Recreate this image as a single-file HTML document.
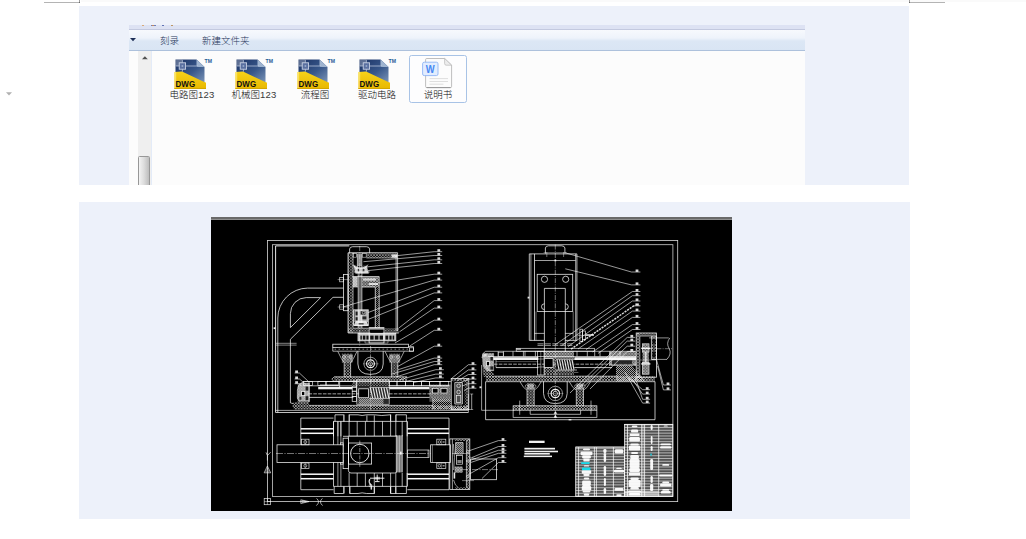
<!DOCTYPE html>
<html lang="zh-CN"><head><meta charset="utf-8"><title>CAD图纸预览</title>
<style>
html,body{margin:0;padding:0;background:#fff;}
body{width:1026px;height:539px;position:relative;overflow:hidden;font-family:"Liberation Sans","Noto Sans CJK SC",sans-serif;}
.abs{position:absolute;}
.panel{position:absolute;background:#edf1fa;}
#p1{left:79px;top:6px;width:830px;height:179px;}
#p2{left:79px;top:202px;width:831px;height:317px;}
#exp{position:absolute;left:129px;top:25px;width:675.5px;height:160px;background:#fcfcfc;overflow:hidden;}
#exp .top{position:absolute;left:0;top:0;width:100%;height:5px;background:#dde2f3;border-bottom:1px solid #c3c9df;box-sizing:border-box;}
#exp .bar{position:absolute;left:0;top:5px;width:100%;height:21px;background:linear-gradient(#f7f9fd 0%,#eef3fb 40%,#dce7f5 55%,#d9e5f4 100%);border-bottom:1px solid #adc1dc;box-sizing:border-box;}
#exp .track{position:absolute;left:9px;top:26px;width:13px;height:134px;background:#efefef;}
#exp .tline{position:absolute;left:22px;top:26px;width:1px;height:134px;background:#e3ebf8;}
#exp .thumb{position:absolute;left:9.1px;top:131px;width:11.9px;height:40px;border:1px solid #979797;border-radius:1.5px;box-sizing:border-box;background:linear-gradient(90deg,#f3f3f3 0%,#dcdcdc 50%,#bdbdbd 100%);}
.t{position:absolute;white-space:nowrap;color:#1a1a1a;font-size:12px;line-height:15px;font-weight:300;transform:scale(.792);transform-origin:0 0;}
.lab{position:absolute;white-space:nowrap;color:#0a0a0a;font-size:12px;line-height:15px;text-align:center;transform:translateX(-50%) scale(.792);transform-origin:50% 0;font-weight:300;}
.dg{color:#3a3a3a;letter-spacing:.2px;}
.sel{position:absolute;left:280px;top:30px;width:58px;height:48px;border:1px solid #a8c3e6;border-radius:2.5px;box-sizing:border-box;background:#fdfdfe;}
.tm{position:absolute;font-size:4.2px;line-height:5px;font-weight:bold;color:#2a5a8a;letter-spacing:0;}
.deco{position:absolute;background:#8c8c8c;}
svg{position:absolute;left:0;top:0;overflow:visible;}
</style></head>
<body>
<div class="deco" style="left:81px;top:0;width:828px;height:2px;background:#fafafa"></div>
<div class="deco" style="left:910px;top:0;width:116px;height:2px;background:#fafafa"></div>
<div class="deco" style="left:44px;top:2px;width:36px;height:1px;background:#b4b4b4"></div>
<div class="deco" style="left:79px;top:0;width:1px;height:3px;background:#a0a0a0"></div>
<div class="deco" style="left:79px;top:2px;width:1px;height:1px;background:#6a6a6a"></div>
<div class="deco" style="left:909px;top:2px;width:36px;height:1px;background:#b4b4b4"></div>
<div class="deco" style="left:909px;top:0;width:1px;height:3px;background:#a0a0a0"></div>
<div class="deco" style="left:909px;top:2px;width:1px;height:1px;background:#6a6a6a"></div>
<svg class="abs" style="left:5.5px;top:92px" width="7" height="4" viewBox="0 0 7 4"><path d="M0 0.3 H6 L3 3.4 Z" fill="#b0b0b0"/></svg>
<div class="panel" id="p1"></div>
<div class="panel" id="p2"></div>
<div id="exp">
<div class="top"></div><div class="bar"></div>
<div class="abs" style="left:12.8px;top:0;width:1.8px;height:1.2px;background:#d9a060;opacity:.85"></div>
<div class="abs" style="left:21.6px;top:0;width:5.2px;height:1.2px;background:#5a6fb0;opacity:.85"></div>
<div class="abs" style="left:23.4px;top:0;width:1.6px;height:1.2px;background:#d08a50;opacity:.85"></div>
<div class="abs" style="left:33.2px;top:0;width:1.8px;height:1.2px;background:#4a5fa8;opacity:.85"></div>
<div class="abs" style="left:42.2px;top:0;width:2px;height:1.2px;background:#b88a4a;opacity:.85"></div>
<svg class="abs" style="left:0.8px;top:13px" width="7" height="4" viewBox="0 0 7 4"><path d="M0 0 H6 L3 3.2 Z" fill="#1e2f57"/></svg>
<div class="t" style="left:31.2px;top:9.6px;color:#28365a">刻录</div>
<div class="t" style="left:73.2px;top:9.6px;color:#28365a">新建文件夹</div>
<div class="track"></div><div class="tline"></div><div class="thumb"></div>
<svg class="abs" style="left:12.8px;top:31px" width="7" height="4" viewBox="0 0 7 4"><path d="M0 3.2 L2.9 0.2 L5.8 3.2 Z" fill="#505050"/></svg>
<div class="sel"></div>
<svg class="abs" style="left:45px;top:33.6px" width="40" height="32" viewBox="0 0 40 32">
<defs><linearGradient id="gb45" x1="0" y1="0" x2="1" y2="1"><stop offset="0" stop-color="#1b3264"/><stop offset="0.55" stop-color="#38578a"/><stop offset="1" stop-color="#7d96b8"/></linearGradient>
<linearGradient id="gy45" x1="0" y1="0" x2="0" y2="1"><stop offset="0" stop-color="#f6d21a"/><stop offset="1" stop-color="#e8b800"/></linearGradient></defs>
<path d="M1.5 0.5 H22.5 L30.5 8 V24 H1.5 Z" fill="url(#gb45)"/>
<path d="M22.5 0.5 L30.5 8 H24.5 Q22.5 8 22.5 6 Z" fill="#9fb4d0"/>
<path d="M0.3 13 L8 12.6 L31.3 23.6 H32 V30 H0.3 Z" fill="url(#gy45)"/>
<path d="M0.3 30 H32 V29 H0.3 Z" fill="#c79a00" opacity="0.6"/>
<path d="M0.3 13 L2.2 12.9 V29 H0.3 Z" fill="#fff3a0" opacity="0.55"/>
<path d="M1.5 0.5 H8 V7 H1.5 Z" fill="#fff" opacity="0.28"/>
<rect x="5.2" y="3.8" width="6.4" height="6.4" fill="#5a70a0" stroke="#d5ddec" stroke-width="0.8"/>
<rect x="7.6" y="6.2" width="1.6" height="1.6" fill="#9fb0d0"/>
<path d="M8.4 0.8 V3.8 M8.4 10.2 V12.6 M1.8 7 H5.2 M11.6 7 H24" stroke="#c9d3e6" stroke-width="0.7" fill="none"/>
<g transform="translate(1.6 28.2) scale(0.5)"><text x="0" y="0" font-family="Liberation Sans, sans-serif" font-weight="bold" font-size="17.2" fill="#111" textLength="39" lengthAdjust="spacingAndGlyphs">DWG</text></g>
<g transform="translate(30.6 4.4) scale(0.25)"><text x="0" y="0" font-family="Liberation Sans, sans-serif" font-weight="bold" font-size="20" fill="#1f5a94" textLength="29.6" lengthAdjust="spacingAndGlyphs">TM</text></g>
</svg>
<div class="lab" style="left:63.4px;top:63.8px">电路图<span class="dg">123</span></div>
<svg class="abs" style="left:106.4px;top:33.6px" width="40" height="32" viewBox="0 0 40 32">
<defs><linearGradient id="gb106" x1="0" y1="0" x2="1" y2="1"><stop offset="0" stop-color="#1b3264"/><stop offset="0.55" stop-color="#38578a"/><stop offset="1" stop-color="#7d96b8"/></linearGradient>
<linearGradient id="gy106" x1="0" y1="0" x2="0" y2="1"><stop offset="0" stop-color="#f6d21a"/><stop offset="1" stop-color="#e8b800"/></linearGradient></defs>
<path d="M1.5 0.5 H22.5 L30.5 8 V24 H1.5 Z" fill="url(#gb106)"/>
<path d="M22.5 0.5 L30.5 8 H24.5 Q22.5 8 22.5 6 Z" fill="#9fb4d0"/>
<path d="M0.3 13 L8 12.6 L31.3 23.6 H32 V30 H0.3 Z" fill="url(#gy106)"/>
<path d="M0.3 30 H32 V29 H0.3 Z" fill="#c79a00" opacity="0.6"/>
<path d="M0.3 13 L2.2 12.9 V29 H0.3 Z" fill="#fff3a0" opacity="0.55"/>
<path d="M1.5 0.5 H8 V7 H1.5 Z" fill="#fff" opacity="0.28"/>
<rect x="5.2" y="3.8" width="6.4" height="6.4" fill="#5a70a0" stroke="#d5ddec" stroke-width="0.8"/>
<rect x="7.6" y="6.2" width="1.6" height="1.6" fill="#9fb0d0"/>
<path d="M8.4 0.8 V3.8 M8.4 10.2 V12.6 M1.8 7 H5.2 M11.6 7 H24" stroke="#c9d3e6" stroke-width="0.7" fill="none"/>
<g transform="translate(1.6 28.2) scale(0.5)"><text x="0" y="0" font-family="Liberation Sans, sans-serif" font-weight="bold" font-size="17.2" fill="#111" textLength="39" lengthAdjust="spacingAndGlyphs">DWG</text></g>
<g transform="translate(30.6 4.4) scale(0.25)"><text x="0" y="0" font-family="Liberation Sans, sans-serif" font-weight="bold" font-size="20" fill="#1f5a94" textLength="29.6" lengthAdjust="spacingAndGlyphs">TM</text></g>
</svg>
<div class="lab" style="left:124.80000000000001px;top:63.8px">机械图<span class="dg">123</span></div>
<svg class="abs" style="left:167.8px;top:33.6px" width="40" height="32" viewBox="0 0 40 32">
<defs><linearGradient id="gb167" x1="0" y1="0" x2="1" y2="1"><stop offset="0" stop-color="#1b3264"/><stop offset="0.55" stop-color="#38578a"/><stop offset="1" stop-color="#7d96b8"/></linearGradient>
<linearGradient id="gy167" x1="0" y1="0" x2="0" y2="1"><stop offset="0" stop-color="#f6d21a"/><stop offset="1" stop-color="#e8b800"/></linearGradient></defs>
<path d="M1.5 0.5 H22.5 L30.5 8 V24 H1.5 Z" fill="url(#gb167)"/>
<path d="M22.5 0.5 L30.5 8 H24.5 Q22.5 8 22.5 6 Z" fill="#9fb4d0"/>
<path d="M0.3 13 L8 12.6 L31.3 23.6 H32 V30 H0.3 Z" fill="url(#gy167)"/>
<path d="M0.3 30 H32 V29 H0.3 Z" fill="#c79a00" opacity="0.6"/>
<path d="M0.3 13 L2.2 12.9 V29 H0.3 Z" fill="#fff3a0" opacity="0.55"/>
<path d="M1.5 0.5 H8 V7 H1.5 Z" fill="#fff" opacity="0.28"/>
<rect x="5.2" y="3.8" width="6.4" height="6.4" fill="#5a70a0" stroke="#d5ddec" stroke-width="0.8"/>
<rect x="7.6" y="6.2" width="1.6" height="1.6" fill="#9fb0d0"/>
<path d="M8.4 0.8 V3.8 M8.4 10.2 V12.6 M1.8 7 H5.2 M11.6 7 H24" stroke="#c9d3e6" stroke-width="0.7" fill="none"/>
<g transform="translate(1.6 28.2) scale(0.5)"><text x="0" y="0" font-family="Liberation Sans, sans-serif" font-weight="bold" font-size="17.2" fill="#111" textLength="39" lengthAdjust="spacingAndGlyphs">DWG</text></g>
<g transform="translate(30.6 4.4) scale(0.25)"><text x="0" y="0" font-family="Liberation Sans, sans-serif" font-weight="bold" font-size="20" fill="#1f5a94" textLength="29.6" lengthAdjust="spacingAndGlyphs">TM</text></g>
</svg>
<div class="lab" style="left:186.20000000000002px;top:63.8px">流程图</div>
<svg class="abs" style="left:229.2px;top:33.6px" width="40" height="32" viewBox="0 0 40 32">
<defs><linearGradient id="gb229" x1="0" y1="0" x2="1" y2="1"><stop offset="0" stop-color="#1b3264"/><stop offset="0.55" stop-color="#38578a"/><stop offset="1" stop-color="#7d96b8"/></linearGradient>
<linearGradient id="gy229" x1="0" y1="0" x2="0" y2="1"><stop offset="0" stop-color="#f6d21a"/><stop offset="1" stop-color="#e8b800"/></linearGradient></defs>
<path d="M1.5 0.5 H22.5 L30.5 8 V24 H1.5 Z" fill="url(#gb229)"/>
<path d="M22.5 0.5 L30.5 8 H24.5 Q22.5 8 22.5 6 Z" fill="#9fb4d0"/>
<path d="M0.3 13 L8 12.6 L31.3 23.6 H32 V30 H0.3 Z" fill="url(#gy229)"/>
<path d="M0.3 30 H32 V29 H0.3 Z" fill="#c79a00" opacity="0.6"/>
<path d="M0.3 13 L2.2 12.9 V29 H0.3 Z" fill="#fff3a0" opacity="0.55"/>
<path d="M1.5 0.5 H8 V7 H1.5 Z" fill="#fff" opacity="0.28"/>
<rect x="5.2" y="3.8" width="6.4" height="6.4" fill="#5a70a0" stroke="#d5ddec" stroke-width="0.8"/>
<rect x="7.6" y="6.2" width="1.6" height="1.6" fill="#9fb0d0"/>
<path d="M8.4 0.8 V3.8 M8.4 10.2 V12.6 M1.8 7 H5.2 M11.6 7 H24" stroke="#c9d3e6" stroke-width="0.7" fill="none"/>
<g transform="translate(1.6 28.2) scale(0.5)"><text x="0" y="0" font-family="Liberation Sans, sans-serif" font-weight="bold" font-size="17.2" fill="#111" textLength="39" lengthAdjust="spacingAndGlyphs">DWG</text></g>
<g transform="translate(30.6 4.4) scale(0.25)"><text x="0" y="0" font-family="Liberation Sans, sans-serif" font-weight="bold" font-size="20" fill="#1f5a94" textLength="29.6" lengthAdjust="spacingAndGlyphs">TM</text></g>
</svg>
<div class="lab" style="left:247.6px;top:63.8px">驱动电路</div>
<svg class="abs" style="left:292.6px;top:32.8px" width="32" height="32" viewBox="0 0 32 32">
<path d="M3.6 1.6 Q3.6 0.5 4.8 0.5 H22.6 L29.6 7.2 V28.4 Q29.6 29.6 28.4 29.6 H4.8 Q3.6 29.6 3.6 28.4 Z" fill="#fcfcfc" stroke="#adadad" stroke-width="0.8"/>
<path d="M4.6 29.6 H28.6" stroke="#8a8a8a" stroke-width="0.8"/>
<path d="M22.6 0.4 V5.6 Q22.6 7.2 24.2 7.2 H29.6 Z" fill="#ececec" stroke="#b9b9b9" stroke-width="0.7"/>
<path d="M7.5 20.6 H26 M7.5 23.5 H26 M7.5 26.2 H21.4" stroke="#d6d6d6" stroke-width="0.8"/>
<rect x="0.6" y="4.2" width="15.4" height="13.4" rx="1.6" fill="#e2edff" stroke="#8fb4f5" stroke-width="0.9"/>
<g transform="translate(8.3 14.9) scale(0.5)"><text x="0" y="0" text-anchor="middle" font-family="Liberation Sans, sans-serif" font-weight="bold" font-size="20.4" fill="#4688f2" textLength="17.8" lengthAdjust="spacingAndGlyphs">W</text></g>
</svg>
<div class="lab" style="left:309.2px;top:63.8px">说明书</div>
</div>
<div class="abs" style="left:211px;top:217px;width:521px;height:294px;background:#000;"></div>
<div class="abs" style="left:211px;top:217px;width:521px;height:2px;background:#6a6a6a;"></div>
<div class="abs" style="left:211px;top:219px;width:521px;height:1px;background:#8e8e8e;"></div>
<svg width="1026" height="539" viewBox="0 0 1026 539">
<defs>
<pattern id="hx" width="2.9" height="2.9" patternUnits="userSpaceOnUse"><path d="M-0.5 -0.5 L3.4 3.4 M-0.5 3.4 L3.4 -0.5" stroke="#fff" stroke-width="0.6"/></pattern>
<pattern id="hd" width="2" height="2" patternUnits="userSpaceOnUse"><path d="M-0.5 2.5 L2.5 -0.5" stroke="#fff" stroke-width="0.7"/></pattern>
<clipPath id="cadclip"><rect x="211" y="220" width="521" height="291"/></clipPath>
</defs>
<g clip-path="url(#cadclip)" stroke-linecap="butt">
<rect x="267.5" y="240.5" width="410.20000000000005" height="261.1" fill="none" stroke="#fff" stroke-width="0.8" stroke-opacity="0.85"/>
<rect x="272.5" y="244.7" width="400.4" height="251.7" fill="none" stroke="#fff" stroke-width="0.8" stroke-opacity="0.8"/>
<rect x="264.2" y="498.6" width="6.400000000000034" height="6.099999999999966" fill="none" stroke="#fff" stroke-width="0.7" stroke-opacity="0.9"/>
<line x1="267.4" y1="498.6" x2="267.4" y2="504.7" stroke="#fff" stroke-width="0.6" stroke-opacity="0.8"/>
<line x1="264.2" y1="501.6" x2="270.6" y2="501.6" stroke="#fff" stroke-width="0.6" stroke-opacity="0.8"/>
<polygon points="300.8,499.8 309,501.6 300.8,503.5" fill="none" stroke="#fff" stroke-width="0.7" stroke-opacity="0.9"/>
<polygon points="302,500.6 306.5,501.6 302,502.7" fill="none" stroke="#fff" stroke-width="0.6" stroke-opacity="0.8"/>
<path d="M316.6 498.4 Q320.6 501.8 316.4 505.6 M322.4 498.4 Q318.4 501.8 322.6 505.6" fill="none" stroke="#fff" stroke-width="0.7" stroke-opacity="0.9"/>
<polygon points="267.4,466 270.7,472.8 264.2,472.8" fill="none" stroke="#fff" stroke-width="0.7" stroke-opacity="0.9"/>
<polygon points="267.4,468.4 269.2,471.8 265.7,471.8" fill="none" stroke="#fff" stroke-width="0.5" stroke-opacity="0.7"/>
<path d="M266 452.4 L267.4 455.6 L270.6 452.2 M267.4 455.6 V460.5" fill="none" stroke="#fff" stroke-width="0.7" stroke-opacity="0.9"/>
<polyline points="275.6,412.5 275.6,245.9 349.3,245.9" fill="none" stroke="#fff" stroke-width="0.9" stroke-opacity="1"/>
<path d="M277.8 412.5 V318 A30 30 0 0 1 307.6 288.1 H343.4" fill="none" stroke="#fff" stroke-width="0.8" stroke-opacity="0.9"/>
<path d="M290.4 327.6 V313.6 A16 16 0 0 1 306.2 297.6 H320.6 Z" fill="none" stroke="#fff" stroke-width="0.8" stroke-opacity="0.9"/>
<polyline points="343.4,297.3 333,297.3 290.4,339.3 290.4,402.9" fill="none" stroke="#fff" stroke-width="0.8" stroke-opacity="0.9"/>
<line x1="276" y1="343.3" x2="296.6" y2="343.3" stroke="#fff" stroke-width="0.6" stroke-opacity="0.85"/>
<line x1="276" y1="345.1" x2="296.6" y2="345.1" stroke="#fff" stroke-width="0.6" stroke-opacity="0.85"/>
<rect x="273.6" y="327.3" width="1.7999999999999545" height="1.8000000000000114" fill="#fff" fill-opacity="0.9" stroke="none"/>
<line x1="275.6" y1="410.4" x2="468.4" y2="410.4" stroke="#fff" stroke-width="0.7" stroke-opacity="0.9"/>
<line x1="275.6" y1="412.5" x2="468.4" y2="412.5" stroke="#fff" stroke-width="0.8" stroke-opacity="0.95"/>
<line x1="468.4" y1="394" x2="468.4" y2="412.5" stroke="#fff" stroke-width="0.7" stroke-opacity="0.8"/>
<path d="M349.6 252.8 V249 Q349.8 246.9 352.6 246.7 H366.6 Q369.4 246.9 369.6 249 V252.8" fill="none" stroke="#fff" stroke-width="0.8" stroke-opacity="0.9"/>
<line x1="359.7" y1="246" x2="359.7" y2="346" stroke="#fff" stroke-width="0.6" stroke-opacity="0.7" stroke-dasharray="5 1.2 1 1.2"/>
<polyline points="348.1,333 348.1,252.8 397.6,252.8" fill="none" stroke="#fff" stroke-width="0.9" stroke-opacity="0.95"/>
<rect x="348.3" y="253" width="4.699999999999989" height="80" fill="url(#hx)" fill-opacity="0.62" stroke="none"/>
<line x1="353" y1="253" x2="353" y2="328" stroke="#fff" stroke-width="0.7" stroke-opacity="0.9"/>
<rect x="366.4" y="253.4" width="30.600000000000023" height="4.599999999999994" fill="url(#hx)" fill-opacity="0.8" stroke="none"/>
<line x1="366.4" y1="258" x2="396" y2="258" stroke="#fff" stroke-width="0.6" stroke-opacity="0.8"/>
<rect x="391.6" y="254.4" width="5.7999999999999545" height="3.200000000000017" fill="#fff" fill-opacity="0.8" stroke="none"/>
<line x1="396.1" y1="254.6" x2="396.1" y2="331" stroke="#fff" stroke-width="0.8" stroke-opacity="0.9"/>
<line x1="397.6" y1="252.8" x2="397.6" y2="331" stroke="#fff" stroke-width="0.8" stroke-opacity="0.9"/>
<rect x="348.3" y="328.2" width="20.30000000000001" height="4.800000000000011" fill="url(#hx)" fill-opacity="0.8" stroke="none"/>
<rect x="384.6" y="328.2" width="14.199999999999989" height="4.800000000000011" fill="url(#hx)" fill-opacity="0.8" stroke="none"/>
<line x1="348.1" y1="333" x2="398.8" y2="333" stroke="#fff" stroke-width="0.8" stroke-opacity="0.9"/>
<line x1="353" y1="328.2" x2="368.6" y2="328.2" stroke="#fff" stroke-width="0.7" stroke-opacity="0.8"/>
<rect x="353.2" y="253.4" width="3.400000000000034" height="3.799999999999983" fill="none" stroke="#fff" stroke-width="0.6" stroke-opacity="0.8"/>
<rect x="362.2" y="253.4" width="4.0" height="3.799999999999983" fill="none" stroke="#fff" stroke-width="0.6" stroke-opacity="0.8"/>
<rect x="357.6" y="253.6" width="4.0" height="12.400000000000006" fill="#fff" fill-opacity="0.55" stroke="none"/>
<line x1="357.4" y1="254" x2="357.4" y2="268" stroke="#fff" stroke-width="0.7" stroke-opacity="0.9"/>
<line x1="361.8" y1="254" x2="361.8" y2="268" stroke="#fff" stroke-width="0.7" stroke-opacity="0.9"/>
<path d="M353.6 265.2 L355.6 273.4 H368.6 L366.4 265.8 L362.4 267.4 L357.6 267.2 Z" fill="#fff" stroke="#fff" stroke-width="0.4" stroke-opacity="0.6" fill-opacity="0.78"/>
<rect x="357.8" y="268.4" width="1.3999999999999773" height="3.2000000000000455" fill="#000" fill-opacity="0.8" stroke="none"/>
<rect x="362.6" y="268.4" width="1.7999999999999545" height="3.2000000000000455" fill="#000" fill-opacity="0.8" stroke="none"/>
<rect x="353.4" y="264.8" width="14.600000000000023" height="7.199999999999989" fill="url(#hx)" fill-opacity="0.35" stroke="none"/>
<polyline points="353.2,264.6 356,268.4 365,268.4 368,264.6" fill="none" stroke="#fff" stroke-width="0.7" stroke-opacity="0.9"/>
<line x1="354" y1="272" x2="369.6" y2="272" stroke="#fff" stroke-width="0.8" stroke-opacity="0.9"/>
<rect x="358.3" y="275" width="3.5" height="53" fill="#6a6a6a" fill-opacity="0.9" stroke="none"/>
<line x1="358.2" y1="272" x2="358.2" y2="328" stroke="#fff" stroke-width="0.7" stroke-opacity="0.9"/>
<line x1="361.9" y1="272" x2="361.9" y2="328" stroke="#fff" stroke-width="0.7" stroke-opacity="0.9"/>
<rect x="353" y="276.8" width="4.600000000000023" height="10.0" fill="#c4c4c4" fill-opacity="0.9" stroke="none"/>
<rect x="352.6" y="276.6" width="5.199999999999989" height="10.399999999999977" fill="url(#hx)" fill-opacity="0.6" stroke="none"/>
<rect x="362.2" y="276.6" width="16.80000000000001" height="10.399999999999977" fill="url(#hx)" fill-opacity="0.85" stroke="none"/>
<rect x="362.4" y="276.8" width="16.600000000000023" height="10.199999999999989" fill="#fff" fill-opacity="0.22" stroke="none"/>
<rect x="363" y="278.4" width="13" height="2.2000000000000455" fill="#fff" fill-opacity="0.7" stroke="none"/>
<rect x="369" y="283.0" width="9" height="2.0" fill="#fff" fill-opacity="0.75" stroke="none"/>
<polyline points="352.4,276.6 379.2,276.6 379.2,328" fill="none" stroke="#fff" stroke-width="0.8" stroke-opacity="0.9"/>
<polyline points="362,287 375.3,287 375.3,328" fill="none" stroke="#fff" stroke-width="0.8" stroke-opacity="0.9"/>
<rect x="375.5" y="287" width="3.5" height="41" fill="url(#hd)" fill-opacity="0.55" stroke="none"/>
<line x1="352.4" y1="287" x2="358" y2="287" stroke="#fff" stroke-width="0.7" stroke-opacity="0.8"/>
<rect x="343.4" y="274.4" width="4.7000000000000455" height="36.30000000000001" fill="none" stroke="#fff" stroke-width="0.8" stroke-opacity="0.9"/>
<rect x="339.7" y="277.4" width="3.6999999999999886" height="4.400000000000034" fill="none" stroke="#fff" stroke-width="0.7" stroke-opacity="0.85"/>
<line x1="337.6" y1="279.6" x2="348" y2="279.6" stroke="#fff" stroke-width="0.6" stroke-opacity="0.7"/>
<rect x="339.7" y="304.8" width="3.6999999999999886" height="4.399999999999977" fill="none" stroke="#fff" stroke-width="0.7" stroke-opacity="0.85"/>
<line x1="337.6" y1="307" x2="348" y2="307" stroke="#fff" stroke-width="0.6" stroke-opacity="0.7"/>
<rect x="354.4" y="310" width="13.600000000000023" height="12.399999999999977" fill="#fff" fill-opacity="0.7" stroke="none"/>
<path d="M353.8 326 L356 321.6 H366.4 L368.4 326 Z" fill="#fff" stroke="#fff" stroke-width="0.3" stroke-opacity="0.5" fill-opacity="0.8"/>
<rect x="355.6" y="311.6" width="2.0" height="3.7999999999999545" fill="#000" fill-opacity="0.85" stroke="none"/>
<rect x="355.6" y="317.2" width="2.0" height="3.1999999999999886" fill="#000" fill-opacity="0.85" stroke="none"/>
<rect x="360.6" y="311.2" width="4.7999999999999545" height="3.400000000000034" fill="#000" fill-opacity="0.85" stroke="none"/>
<rect x="362.4" y="316.4" width="4.0" height="3.0" fill="#000" fill-opacity="0.8" stroke="none"/>
<rect x="358.6" y="323.2" width="5.0" height="1.400000000000034" fill="#000" fill-opacity="0.8" stroke="none"/>
<rect x="353.6" y="309.8" width="14.699999999999989" height="15.399999999999977" fill="none" stroke="#fff" stroke-width="0.8" stroke-opacity="0.9"/>
<circle cx="363.6" cy="312.6" r="1.3" fill="none" stroke="#fff" stroke-width="0.6" stroke-opacity="0.9"/>
<polyline points="353.4,325.4 356,322 366,322 368.4,325.4" fill="none" stroke="#fff" stroke-width="0.7" stroke-opacity="0.8"/>
<rect x="358" y="333.4" width="37.80000000000001" height="7.400000000000034" fill="none" stroke="#fff" stroke-width="0.8" stroke-opacity="0.9"/>
<rect x="358.2" y="333.6" width="37.400000000000034" height="7.0" fill="#fff" fill-opacity="0.78" stroke="none"/>
<rect x="360.4" y="335.6" width="1.400000000000034" height="4.0" fill="#000" fill-opacity="0.92" stroke="none"/>
<rect x="362.8" y="335.6" width="2.599999999999966" height="4.0" fill="#000" fill-opacity="0.92" stroke="none"/>
<rect x="366.4" y="335.6" width="2.400000000000034" height="4.0" fill="#000" fill-opacity="0.92" stroke="none"/>
<rect x="370.2" y="335.6" width="3.400000000000034" height="4.0" fill="#000" fill-opacity="0.92" stroke="none"/>
<rect x="374.8" y="335.6" width="3.599999999999966" height="4.0" fill="#000" fill-opacity="0.92" stroke="none"/>
<rect x="379.6" y="335.6" width="3.3999999999999773" height="4.0" fill="#000" fill-opacity="0.92" stroke="none"/>
<rect x="385.4" y="335.6" width="2.8000000000000114" height="4.0" fill="#000" fill-opacity="0.92" stroke="none"/>
<rect x="389.4" y="335.6" width="2.2000000000000455" height="4.0" fill="#000" fill-opacity="0.92" stroke="none"/>
<rect x="392.6" y="335.6" width="1.599999999999966" height="4.0" fill="#000" fill-opacity="0.92" stroke="none"/>
<rect x="369.1" y="327.6" width="14.899999999999977" height="15.399999999999977" fill="none" stroke="#fff" stroke-width="0.8" stroke-opacity="0.9"/>
<rect x="369.4" y="327.8" width="14.400000000000034" height="1.8000000000000114" fill="#fff" fill-opacity="0.7" stroke="none"/>
<rect x="370.4" y="330.2" width="12.400000000000034" height="2.6000000000000227" fill="#000" fill-opacity="0.9" stroke="none"/>
<polyline points="365,340.8 365,343 388,343 388,340.8" fill="none" stroke="#fff" stroke-width="0.6" stroke-opacity="0.7"/>
<rect x="332.8" y="344.2" width="75.59999999999997" height="3.400000000000034" fill="none" stroke="#fff" stroke-width="0.8" stroke-opacity="0.9"/>
<polyline points="332.8,347.6 332.8,351.2 413.5,351.2 413.5,346.6 408.4,346.6" fill="none" stroke="#fff" stroke-width="0.7" stroke-opacity="0.9"/>
<rect x="409.6" y="347.8" width="3.7999999999999545" height="3.3999999999999773" fill="none" stroke="#fff" stroke-width="0.7" stroke-opacity="0.9"/>
<line x1="334.5" y1="349.2" x2="408" y2="349.2" stroke="#fff" stroke-width="0.9" stroke-opacity="0.55" stroke-dasharray="1.6 2.4"/>
<rect x="344.2" y="362.4" width="6.399999999999977" height="14.400000000000034" fill="url(#hx)" fill-opacity="0.8" stroke="none"/>
<line x1="344.2" y1="362.4" x2="344.2" y2="376.8" stroke="#fff" stroke-width="0.7" stroke-opacity="0.9"/>
<line x1="350.59999999999997" y1="362.4" x2="350.59999999999997" y2="376.8" stroke="#fff" stroke-width="0.7" stroke-opacity="0.9"/>
<rect x="342.4" y="354.4" width="10.0" height="8.200000000000045" fill="#fff" fill-opacity="0.3" stroke="none"/>
<rect x="341.79999999999995" y="353.6" width="11.200000000000045" height="9.0" fill="url(#hx)" fill-opacity="0.7" stroke="none"/>
<polyline points="337.79999999999995,351.4 341.4,358.6 344.0,362.4" fill="none" stroke="#fff" stroke-width="0.7" stroke-opacity="0.85"/>
<polyline points="357.0,351.4 353.4,358.6 350.79999999999995,362.4" fill="none" stroke="#fff" stroke-width="0.7" stroke-opacity="0.85"/>
<circle cx="344.0" cy="357" r="1.5" fill="none" stroke="#fff" stroke-width="0.6" stroke-opacity="0.8"/>
<circle cx="350.79999999999995" cy="357" r="1.5" fill="none" stroke="#fff" stroke-width="0.6" stroke-opacity="0.8"/>
<rect x="391.40000000000003" y="362.4" width="6.399999999999977" height="14.400000000000034" fill="url(#hx)" fill-opacity="0.8" stroke="none"/>
<line x1="391.40000000000003" y1="362.4" x2="391.40000000000003" y2="376.8" stroke="#fff" stroke-width="0.7" stroke-opacity="0.9"/>
<line x1="397.8" y1="362.4" x2="397.8" y2="376.8" stroke="#fff" stroke-width="0.7" stroke-opacity="0.9"/>
<rect x="389.6" y="354.4" width="10.0" height="8.200000000000045" fill="#fff" fill-opacity="0.3" stroke="none"/>
<rect x="389.0" y="353.6" width="11.200000000000045" height="9.0" fill="url(#hx)" fill-opacity="0.7" stroke="none"/>
<polyline points="385.0,351.4 388.6,358.6 391.20000000000005,362.4" fill="none" stroke="#fff" stroke-width="0.7" stroke-opacity="0.85"/>
<polyline points="404.20000000000005,351.4 400.6,358.6 398.0,362.4" fill="none" stroke="#fff" stroke-width="0.7" stroke-opacity="0.85"/>
<circle cx="391.20000000000005" cy="357" r="1.5" fill="none" stroke="#fff" stroke-width="0.6" stroke-opacity="0.8"/>
<circle cx="398.0" cy="357" r="1.5" fill="none" stroke="#fff" stroke-width="0.6" stroke-opacity="0.8"/>
<path d="M357.9 351.2 V364 Q358.4 374.4 370.5 374.4 Q382.8 374.4 383.2 364 V351.2" fill="none" stroke="#fff" stroke-width="0.8" stroke-opacity="0.9"/>
<circle cx="370.5" cy="363.8" r="6.6" fill="none" stroke="#fff" stroke-width="0.7" stroke-opacity="0.8"/>
<circle cx="370.5" cy="363.8" r="3.9" fill="none" stroke="#fff" stroke-width="1.2" stroke-opacity="0.95"/>
<circle cx="370.5" cy="363.8" r="2.0" fill="none" stroke="#fff" stroke-width="0.8" stroke-opacity="0.9"/>
<line x1="363" y1="363.8" x2="378.6" y2="363.8" stroke="#fff" stroke-width="0.5" stroke-opacity="0.6"/>
<line x1="370.5" y1="346" x2="370.5" y2="410" stroke="#fff" stroke-width="0.6" stroke-opacity="0.7" stroke-dasharray="5 1.2 1 1.2"/>
<rect x="334.2" y="376.8" width="73.0" height="4.599999999999966" fill="url(#hx)" fill-opacity="0.85" stroke="none"/>
<line x1="334.2" y1="376.8" x2="407.2" y2="376.8" stroke="#fff" stroke-width="0.7" stroke-opacity="0.9"/>
<polyline points="334.2,381.4 331.8,379.2 334.2,376.8" fill="none" stroke="#fff" stroke-width="0.7" stroke-opacity="0.9"/>
<line x1="304.5" y1="381.5" x2="450.8" y2="381.5" stroke="#fff" stroke-width="0.8" stroke-opacity="0.9"/>
<rect x="317.9" y="381.5" width="8.100000000000023" height="4.100000000000023" fill="none" stroke="#fff" stroke-width="0.7" stroke-opacity="0.9"/>
<rect x="326" y="381.5" width="12.699999999999989" height="4.100000000000023" fill="none" stroke="#fff" stroke-width="0.7" stroke-opacity="0.9"/>
<rect x="303.6" y="381.5" width="8.799999999999955" height="4.100000000000023" fill="none" stroke="#fff" stroke-width="0.7" stroke-opacity="0.9"/>
<rect x="339.7" y="381.3" width="16.5" height="6.099999999999966" fill="none" stroke="#fff" stroke-width="0.8" stroke-opacity="0.9"/>
<line x1="320" y1="385.0" x2="338" y2="385.0" stroke="#fff" stroke-width="0.8" stroke-opacity="0.9"/>
<line x1="309" y1="385.8" x2="352" y2="385.8" stroke="#fff" stroke-width="0.7" stroke-opacity="0.9"/>
<rect x="318.2" y="386.9" width="34.10000000000002" height="2.400000000000034" fill="#fff" fill-opacity="0.95" stroke="none"/>
<rect x="389.6" y="381.5" width="7.399999999999977" height="4.300000000000011" fill="none" stroke="#fff" stroke-width="0.7" stroke-opacity="0.85"/>
<rect x="397" y="381.5" width="8.600000000000023" height="4.300000000000011" fill="none" stroke="#fff" stroke-width="0.7" stroke-opacity="0.85"/>
<rect x="405.6" y="381.5" width="8.0" height="4.300000000000011" fill="none" stroke="#fff" stroke-width="0.7" stroke-opacity="0.85"/>
<rect x="413.6" y="381.5" width="8.0" height="4.300000000000011" fill="none" stroke="#fff" stroke-width="0.7" stroke-opacity="0.85"/>
<rect x="421.6" y="381.5" width="7.7999999999999545" height="4.300000000000011" fill="none" stroke="#fff" stroke-width="0.7" stroke-opacity="0.85"/>
<rect x="429.4" y="381.5" width="10.600000000000023" height="4.300000000000011" fill="none" stroke="#fff" stroke-width="0.7" stroke-opacity="0.85"/>
<rect x="440" y="381.5" width="8.699999999999989" height="4.300000000000011" fill="none" stroke="#fff" stroke-width="0.7" stroke-opacity="0.85"/>
<rect x="389.3" y="386.9" width="40.099999999999966" height="2.400000000000034" fill="#fff" fill-opacity="0.95" stroke="none"/>
<line x1="389.3" y1="385.8" x2="448.7" y2="385.8" stroke="#fff" stroke-width="0.7" stroke-opacity="0.9"/>
<line x1="308.5" y1="393.7" x2="368" y2="393.7" stroke="#fff" stroke-width="1.5" stroke-opacity="0.42" stroke-dasharray="3.6 1.2"/>
<line x1="389" y1="393.7" x2="432" y2="393.7" stroke="#fff" stroke-width="1.5" stroke-opacity="0.42" stroke-dasharray="3.6 1.2"/>
<line x1="309" y1="397.4" x2="353.4" y2="397.4" stroke="#fff" stroke-width="0.8" stroke-opacity="0.95"/>
<line x1="389.3" y1="397.4" x2="429.4" y2="397.4" stroke="#fff" stroke-width="0.8" stroke-opacity="0.95"/>
<path d="M298.4 386 L301 383 H309.6 V401.6 H299.6 L297.8 398 Z" fill="#fff" stroke="#fff" stroke-width="0.3" stroke-opacity="0.5" fill-opacity="0.6"/>
<rect x="297.2" y="384.4" width="11.800000000000011" height="17.600000000000023" fill="url(#hx)" fill-opacity="0.5" stroke="none"/>
<rect x="301.6" y="391.4" width="3.1999999999999886" height="4.2000000000000455" fill="#000" stroke="#fff" stroke-width="0.8" stroke-opacity="0.95"/>
<rect x="305.6" y="386.6" width="3.0" height="4.0" fill="#000" fill-opacity="0.8" stroke="none"/>
<rect x="305.6" y="396.2" width="3.0" height="4.0" fill="#000" fill-opacity="0.8" stroke="none"/>
<rect x="299.4" y="396.8" width="2.0" height="3.0" fill="#000" fill-opacity="0.7" stroke="none"/>
<polyline points="304.5,381.5 299,384.2 297.4,390 297.4,398 299.4,402" fill="none" stroke="#fff" stroke-width="0.7" stroke-opacity="0.9"/>
<line x1="309" y1="381.5" x2="309" y2="402" stroke="#fff" stroke-width="0.7" stroke-opacity="0.9"/>
<polygon points="292.7,402.8 299,402 309,402 309,405.4 468,405.4 468,409.6 294.5,409.6 292.7,407" fill="url(#hx)" fill-opacity="0.9" stroke="none"/>
<line x1="309" y1="405.4" x2="433" y2="405.4" stroke="#fff" stroke-width="0.7" stroke-opacity="0.9"/>
<polyline points="290.4,402.9 293,403.6" fill="none" stroke="#fff" stroke-width="0.7" stroke-opacity="0.9"/>
<rect x="352.2" y="379.8" width="37.0" height="6.199999999999989" fill="url(#hx)" fill-opacity="0.75" stroke="none"/>
<rect x="352.2" y="386.2" width="4.400000000000034" height="5.0" fill="none" stroke="#fff" stroke-width="0.7" stroke-opacity="0.9"/>
<rect x="352.2" y="391.2" width="4.400000000000034" height="5.199999999999989" fill="none" stroke="#fff" stroke-width="0.7" stroke-opacity="0.9"/>
<rect x="352.2" y="396.4" width="4.400000000000034" height="5.2000000000000455" fill="none" stroke="#fff" stroke-width="0.7" stroke-opacity="0.9"/>
<rect x="356.8" y="386.2" width="32.39999999999998" height="18.0" fill="#fff" fill-opacity="0.16" stroke="none"/>
<rect x="358.7" y="388.8" width="9.699999999999989" height="8.899999999999977" fill="#000" stroke="#fff" stroke-width="0.8" stroke-opacity="0.9"/>
<rect x="358.7" y="398.4" width="24.69999999999999" height="5.800000000000011" fill="url(#hd)" fill-opacity="0.8" stroke="none"/>
<rect x="358.7" y="398.6" width="24.69999999999999" height="5.399999999999977" fill="#999" fill-opacity="0.45" stroke="none"/>
<line x1="370.4" y1="387.6" x2="372.59999999999997" y2="398.2" stroke="#fff" stroke-width="1.1" stroke-opacity="0.9"/>
<line x1="373.09999999999997" y1="387.6" x2="375.29999999999995" y2="398.2" stroke="#fff" stroke-width="1.1" stroke-opacity="0.9"/>
<line x1="375.79999999999995" y1="387.6" x2="377.99999999999994" y2="398.2" stroke="#fff" stroke-width="1.1" stroke-opacity="0.9"/>
<line x1="378.5" y1="387.6" x2="380.7" y2="398.2" stroke="#fff" stroke-width="1.1" stroke-opacity="0.9"/>
<line x1="381.2" y1="387.6" x2="383.4" y2="398.2" stroke="#fff" stroke-width="1.1" stroke-opacity="0.9"/>
<line x1="383.9" y1="387.6" x2="386.09999999999997" y2="398.2" stroke="#fff" stroke-width="1.1" stroke-opacity="0.9"/>
<line x1="386.59999999999997" y1="387.6" x2="388.79999999999995" y2="398.2" stroke="#fff" stroke-width="1.1" stroke-opacity="0.9"/>
<line x1="369.4" y1="387.4" x2="390" y2="387.4" stroke="#fff" stroke-width="0.7" stroke-opacity="0.9"/>
<line x1="369.4" y1="398.4" x2="390" y2="398.4" stroke="#fff" stroke-width="0.7" stroke-opacity="0.9"/>
<rect x="356.8" y="379.8" width="32.39999999999998" height="24.5" fill="none" stroke="#fff" stroke-width="0.7" stroke-opacity="0.8"/>
<rect x="429.4" y="384.6" width="21.200000000000045" height="17.19999999999999" fill="#fff" fill-opacity="0.3" stroke="none"/>
<rect x="429.4" y="384.6" width="21.200000000000045" height="13.799999999999955" fill="url(#hx)" fill-opacity="0.6" stroke="none"/>
<rect x="432.6" y="388.4" width="5.399999999999977" height="4.600000000000023" fill="#000" stroke="#fff" stroke-width="0.7" stroke-opacity="0.9"/>
<rect x="441" y="388.4" width="6" height="4.600000000000023" fill="#000" stroke="#fff" stroke-width="0.7" stroke-opacity="0.9"/>
<polygon points="432.8,398.4 450.8,398.4 450.8,406.6 468.6,406.6 468.6,409.6 432.8,409.6" fill="url(#hd)" fill-opacity="0.85" stroke="none"/>
<line x1="432.8" y1="398.4" x2="432.8" y2="409.6" stroke="#fff" stroke-width="0.7" stroke-opacity="0.8"/>
<rect x="451.2" y="378.4" width="17.600000000000023" height="31.200000000000045" fill="none" stroke="#fff" stroke-width="0.8" stroke-opacity="0.9"/>
<rect x="464.6" y="380" width="4.0" height="26.399999999999977" fill="url(#hx)" fill-opacity="0.7" stroke="none"/>
<rect x="451" y="378.6" width="17.600000000000023" height="2.7999999999999545" fill="url(#hx)" fill-opacity="0.7" stroke="none"/>
<path d="M454.8 382.6 H462.4 V404 H454.8 Z" fill="none" stroke="#fff" stroke-width="0.8" stroke-opacity="0.9"/>
<rect x="455.4" y="383.4" width="6.400000000000034" height="20.0" fill="#fff" fill-opacity="0.3" stroke="none"/>
<circle cx="458.6" cy="385.8" r="1.8" fill="none" stroke="#fff" stroke-width="0.7" stroke-opacity="0.9"/>
<circle cx="458.6" cy="392" r="1.8" fill="none" stroke="#fff" stroke-width="0.7" stroke-opacity="0.9"/>
<rect x="456.4" y="395.6" width="4.400000000000034" height="7.0" fill="none" stroke="#fff" stroke-width="0.7" stroke-opacity="0.9"/>
<line x1="471.7" y1="394" x2="471.7" y2="409.5" stroke="#fff" stroke-width="0.7" stroke-opacity="0.85"/>
<line x1="470.2" y1="394" x2="473.2" y2="394" stroke="#fff" stroke-width="0.6" stroke-opacity="0.8"/>
<line x1="468.4" y1="409.5" x2="473.2" y2="409.5" stroke="#fff" stroke-width="0.6" stroke-opacity="0.8"/>
<path d="M545.4 253.6 V248 Q545.6 246 548.4 245.8 H561.8 Q564.7 246 564.9 248 V253.6" fill="none" stroke="#fff" stroke-width="0.8" stroke-opacity="0.9"/>
<line x1="555.3" y1="244.6" x2="555.3" y2="420" stroke="#fff" stroke-width="0.6" stroke-opacity="0.75" stroke-dasharray="5 1.2 1 1.2"/>
<line x1="546.8" y1="252" x2="546.8" y2="257" stroke="#fff" stroke-width="0.6" stroke-opacity="0.7"/>
<line x1="563.6" y1="252" x2="563.6" y2="257" stroke="#fff" stroke-width="0.6" stroke-opacity="0.7"/>
<line x1="543.6" y1="252.6" x2="566.6" y2="252.6" stroke="#fff" stroke-width="0.6" stroke-opacity="0.6"/>
<polyline points="529.3,340.4 529.3,253.9 576.9,253.9 576.9,340.4" fill="none" stroke="#fff" stroke-width="0.8" stroke-opacity="0.9"/>
<line x1="530.9" y1="253.9" x2="530.9" y2="340.4" stroke="#fff" stroke-width="0.7" stroke-opacity="0.85"/>
<line x1="534.5" y1="253.9" x2="534.5" y2="340.4" stroke="#fff" stroke-width="0.8" stroke-opacity="0.9"/>
<line x1="575.6" y1="253.9" x2="575.6" y2="340.4" stroke="#fff" stroke-width="0.7" stroke-opacity="0.85"/>
<line x1="534.5" y1="260.5" x2="575.6" y2="260.5" stroke="#fff" stroke-width="0.7" stroke-opacity="0.9"/>
<rect x="554.5" y="259.6" width="1.7000000000000455" height="1.7999999999999545" fill="#fff" fill-opacity="0.9" stroke="none"/>
<line x1="529.3" y1="340.4" x2="544.3" y2="340.4" stroke="#fff" stroke-width="0.8" stroke-opacity="0.9"/>
<line x1="565.2" y1="340.4" x2="576.9" y2="340.4" stroke="#fff" stroke-width="0.8" stroke-opacity="0.9"/>
<line x1="534.5" y1="333.4" x2="544.3" y2="333.4" stroke="#fff" stroke-width="0.7" stroke-opacity="0.9"/>
<line x1="565.2" y1="333.4" x2="573.2" y2="333.4" stroke="#fff" stroke-width="0.7" stroke-opacity="0.9"/>
<line x1="573.2" y1="311.5" x2="573.2" y2="340.4" stroke="#fff" stroke-width="0.6" stroke-opacity="0.7"/>
<line x1="536" y1="311.5" x2="536" y2="340.4" stroke="#fff" stroke-width="0.6" stroke-opacity="0.7"/>
<rect x="537.2" y="274.3" width="35.5" height="37.30000000000001" fill="none" stroke="#fff" stroke-width="0.8" stroke-opacity="0.9"/>
<circle cx="544.5" cy="279.3" r="3.1" fill="none" stroke="#fff" stroke-width="0.8" stroke-opacity="0.9"/>
<circle cx="565.7" cy="279.3" r="3.1" fill="none" stroke="#fff" stroke-width="0.8" stroke-opacity="0.9"/>
<path d="M544.4 303.8 A2.9 2.9 0 0 0 544.4 309.6" fill="none" stroke="#fff" stroke-width="0.8" stroke-opacity="0.9"/>
<path d="M565.4 303.8 A2.9 2.9 0 0 1 565.4 309.6" fill="none" stroke="#fff" stroke-width="0.8" stroke-opacity="0.9"/>
<polyline points="544.4,352 544.4,288.4 565.3,288.4 565.3,352" fill="none" stroke="#fff" stroke-width="0.8" stroke-opacity="0.9"/>
<rect x="527.6" y="296.7" width="1.7999999999999545" height="1.8000000000000114" fill="#fff" fill-opacity="0.9" stroke="none"/>
<line x1="537.5" y1="343.8" x2="572.4" y2="343.8" stroke="#fff" stroke-width="0.7" stroke-opacity="0.8" stroke-dasharray="6 1.4"/>
<line x1="537.5" y1="345.4" x2="572.4" y2="345.4" stroke="#fff" stroke-width="0.7" stroke-opacity="0.8" stroke-dasharray="6 1.4"/>
<rect x="516.2" y="348.3" width="78.39999999999998" height="2.8999999999999773" fill="none" stroke="#fff" stroke-width="0.7" stroke-opacity="0.9"/>
<rect x="516.4" y="348.4" width="4.600000000000023" height="1.6000000000000227" fill="#fff" fill-opacity="0.6" stroke="none"/>
<line x1="485.6" y1="351.3" x2="636" y2="351.3" stroke="#fff" stroke-width="0.7" stroke-opacity="0.85"/>
<line x1="488" y1="356.5" x2="636" y2="356.5" stroke="#fff" stroke-width="0.7" stroke-opacity="0.9"/>
<line x1="498.2" y1="351.3" x2="498.2" y2="356.5" stroke="#fff" stroke-width="0.7" stroke-opacity="0.9"/>
<line x1="503.4" y1="351.3" x2="503.4" y2="356.5" stroke="#fff" stroke-width="0.7" stroke-opacity="0.9"/>
<line x1="513" y1="351.3" x2="513" y2="356.5" stroke="#fff" stroke-width="0.7" stroke-opacity="0.9"/>
<line x1="523.4" y1="351.3" x2="523.4" y2="356.5" stroke="#fff" stroke-width="0.7" stroke-opacity="0.9"/>
<line x1="525" y1="351.3" x2="525" y2="356.5" stroke="#fff" stroke-width="0.7" stroke-opacity="0.9"/>
<line x1="535.4" y1="351.3" x2="535.4" y2="356.5" stroke="#fff" stroke-width="0.7" stroke-opacity="0.9"/>
<line x1="577" y1="351.3" x2="577" y2="356.5" stroke="#fff" stroke-width="0.7" stroke-opacity="0.9"/>
<line x1="587.3" y1="351.3" x2="587.3" y2="356.5" stroke="#fff" stroke-width="0.7" stroke-opacity="0.9"/>
<line x1="594.7" y1="351.3" x2="594.7" y2="356.5" stroke="#fff" stroke-width="0.7" stroke-opacity="0.9"/>
<line x1="600" y1="351.3" x2="600" y2="356.5" stroke="#fff" stroke-width="0.7" stroke-opacity="0.9"/>
<line x1="610" y1="351.3" x2="610" y2="356.5" stroke="#fff" stroke-width="0.7" stroke-opacity="0.9"/>
<line x1="620" y1="351.3" x2="620" y2="356.5" stroke="#fff" stroke-width="0.7" stroke-opacity="0.9"/>
<rect x="498.2" y="352.6" width="5.199999999999989" height="3.8999999999999773" fill="none" stroke="#fff" stroke-width="0.6" stroke-opacity="0.7"/>
<rect x="492.3" y="357.2" width="45.99999999999994" height="2.8000000000000114" fill="#fff" fill-opacity="0.95" stroke="none"/>
<rect x="574.4" y="357.2" width="61.60000000000002" height="2.8000000000000114" fill="#fff" fill-opacity="0.95" stroke="none"/>
<line x1="494" y1="364.2" x2="636" y2="364.2" stroke="#fff" stroke-width="1.5" stroke-opacity="0.42" stroke-dasharray="3.6 1.2"/>
<line x1="496" y1="367.6" x2="538.3" y2="367.6" stroke="#fff" stroke-width="0.8" stroke-opacity="0.95"/>
<line x1="574.4" y1="367.6" x2="612" y2="367.6" stroke="#fff" stroke-width="0.8" stroke-opacity="0.95"/>
<line x1="496" y1="361.6" x2="538.3" y2="361.6" stroke="#fff" stroke-width="0.6" stroke-opacity="0.5"/>
<line x1="496" y1="360" x2="496" y2="367.6" stroke="#fff" stroke-width="0.7" stroke-opacity="0.8"/>
<path d="M482.4 357 L485 353.4 H493.8 V371 H487 L483 366 Z" fill="#fff" stroke="#fff" stroke-width="0.3" stroke-opacity="0.5" fill-opacity="0.6"/>
<polygon points="482.6,366 487,366 493.8,374 493.8,377 484,377 482.6,372" fill="url(#hx)" fill-opacity="0.85" stroke="none"/>
<rect x="482" y="353" width="11.800000000000011" height="13" fill="url(#hx)" fill-opacity="0.45" stroke="none"/>
<rect x="486.4" y="361.6" width="3.2000000000000455" height="4.199999999999989" fill="#000" stroke="#fff" stroke-width="0.8" stroke-opacity="0.95"/>
<rect x="490.4" y="357" width="2.8000000000000114" height="3.6000000000000227" fill="#000" fill-opacity="0.8" stroke="none"/>
<rect x="490.4" y="366.4" width="2.8000000000000114" height="3.2000000000000455" fill="#000" fill-opacity="0.8" stroke="none"/>
<polyline points="485.6,351.3 483,353.6 482,358" fill="none" stroke="#fff" stroke-width="0.7" stroke-opacity="0.9"/>
<rect x="482.6" y="353.6" width="4.0" height="3.0" fill="#fff" fill-opacity="0.6" stroke="none"/>
<rect x="485.8" y="376.2" width="169.2" height="5.400000000000034" fill="url(#hx)" fill-opacity="0.9" stroke="none"/>
<line x1="485.8" y1="381.7" x2="655" y2="381.7" stroke="#fff" stroke-width="0.7" stroke-opacity="0.9"/>
<line x1="493.8" y1="376.2" x2="618" y2="376.2" stroke="#fff" stroke-width="0.7" stroke-opacity="0.9"/>
<rect x="537.5" y="351.3" width="6.7000000000000455" height="23.69999999999999" fill="none" stroke="#fff" stroke-width="0.7" stroke-opacity="0.9"/>
<line x1="537.5" y1="359" x2="544.2" y2="359" stroke="#fff" stroke-width="0.6" stroke-opacity="0.8"/>
<line x1="537.5" y1="367" x2="544.2" y2="367" stroke="#fff" stroke-width="0.6" stroke-opacity="0.8"/>
<line x1="540.8" y1="351.3" x2="540.8" y2="375" stroke="#fff" stroke-width="0.6" stroke-opacity="0.7"/>
<rect x="543.6" y="351.3" width="30.399999999999977" height="23.69999999999999" fill="url(#hx)" fill-opacity="0.85" stroke="none"/>
<rect x="543.6" y="351.3" width="30.399999999999977" height="6.699999999999989" fill="#fff" fill-opacity="0.25" stroke="none"/>
<rect x="544.3" y="358.6" width="8.800000000000068" height="8.899999999999977" fill="#000" stroke="#fff" stroke-width="0.8" stroke-opacity="0.9"/>
<rect x="556" y="359.4" width="18" height="10.400000000000034" fill="#000" fill-opacity="0.75" stroke="none"/>
<line x1="557.0" y1="359.6" x2="559.0" y2="369.6" stroke="#fff" stroke-width="1.1" stroke-opacity="0.9"/>
<line x1="559.5" y1="359.6" x2="561.5" y2="369.6" stroke="#fff" stroke-width="1.1" stroke-opacity="0.9"/>
<line x1="562.0" y1="359.6" x2="564.0" y2="369.6" stroke="#fff" stroke-width="1.1" stroke-opacity="0.9"/>
<line x1="564.5" y1="359.6" x2="566.5" y2="369.6" stroke="#fff" stroke-width="1.1" stroke-opacity="0.9"/>
<line x1="567.0" y1="359.6" x2="569.0" y2="369.6" stroke="#fff" stroke-width="1.1" stroke-opacity="0.9"/>
<line x1="569.5" y1="359.6" x2="571.5" y2="369.6" stroke="#fff" stroke-width="1.1" stroke-opacity="0.9"/>
<line x1="572.0" y1="359.6" x2="574.0" y2="369.6" stroke="#fff" stroke-width="1.1" stroke-opacity="0.9"/>
<line x1="556" y1="359.2" x2="577" y2="359.2" stroke="#fff" stroke-width="0.7" stroke-opacity="0.9"/>
<line x1="556" y1="370" x2="577" y2="370" stroke="#fff" stroke-width="0.7" stroke-opacity="0.9"/>
<line x1="574" y1="372.4" x2="578.4" y2="372.4" stroke="#fff" stroke-width="0.6" stroke-opacity="0.7"/>
<rect x="609" y="351.6" width="27" height="14.399999999999977" fill="#fff" fill-opacity="0.35" stroke="none"/>
<rect x="609" y="351.6" width="27" height="14.399999999999977" fill="url(#hx)" fill-opacity="0.6" stroke="none"/>
<rect x="612" y="360.4" width="20" height="4.0" fill="#000" fill-opacity="0.7" stroke="none"/>
<polygon points="616,365.4 631,365.4 646,381.6 616,381.6" fill="url(#hd)" fill-opacity="0.9" stroke="none"/>
<rect x="616" y="366" width="18" height="15" fill="#bbb" fill-opacity="0.12" stroke="none"/>
<rect x="579.9" y="329.2" width="2.7000000000000455" height="12.199999999999989" fill="none" stroke="#fff" stroke-width="0.7" stroke-opacity="0.9"/>
<rect x="582.6" y="331" width="3.0" height="8.800000000000011" fill="none" stroke="#fff" stroke-width="0.7" stroke-opacity="0.9"/>
<line x1="577.6" y1="335.4" x2="588.6" y2="335.4" stroke="#fff" stroke-width="0.6" stroke-opacity="0.7"/>
<rect x="586" y="334.2" width="8" height="1.6000000000000227" fill="#fff" fill-opacity="0.8" stroke="none"/>
<rect x="636.2" y="333" width="20.299999999999955" height="44.19999999999999" fill="none" stroke="#fff" stroke-width="0.8" stroke-opacity="0.9"/>
<rect x="636.4" y="333.2" width="3.2000000000000455" height="43.80000000000001" fill="url(#hx)" fill-opacity="0.8" stroke="none"/>
<rect x="636.4" y="333.2" width="20.0" height="2.6000000000000227" fill="url(#hx)" fill-opacity="0.8" stroke="none"/>
<line x1="639.8" y1="336" x2="639.8" y2="377" stroke="#fff" stroke-width="0.7" stroke-opacity="0.9"/>
<line x1="639.8" y1="336" x2="651" y2="336" stroke="#fff" stroke-width="0.7" stroke-opacity="0.9"/>
<rect x="642.6" y="344" width="6.199999999999932" height="30" fill="#fff" fill-opacity="0.35" stroke="none"/>
<rect x="642.4" y="343.8" width="6.600000000000023" height="30.399999999999977" fill="url(#hx)" fill-opacity="0.7" stroke="none"/>
<rect x="642.4" y="343.8" width="6.600000000000023" height="8.199999999999989" fill="none" stroke="#fff" stroke-width="0.7" stroke-opacity="0.9"/>
<rect x="642.4" y="362.4" width="6.600000000000023" height="11.800000000000011" fill="none" stroke="#fff" stroke-width="0.7" stroke-opacity="0.9"/>
<rect x="641.2" y="347.6" width="9.199999999999932" height="1.3999999999999773" fill="#fff" fill-opacity="0.9" stroke="none"/>
<rect x="641.2" y="363.2" width="9.199999999999932" height="1.400000000000034" fill="#fff" fill-opacity="0.9" stroke="none"/>
<line x1="645.7" y1="352" x2="645.7" y2="362.4" stroke="#fff" stroke-width="1.6" stroke-opacity="0.7"/>
<rect x="651.3" y="336" width="5.100000000000023" height="23.399999999999977" fill="url(#hx)" fill-opacity="0.8" stroke="none"/>
<rect x="651.3" y="336" width="5.2000000000000455" height="23.399999999999977" fill="none" stroke="#fff" stroke-width="0.7" stroke-opacity="0.9"/>
<rect x="652.4" y="339" width="3.0" height="4.600000000000023" fill="#000" fill-opacity="0.8" stroke="none"/>
<rect x="652.4" y="352" width="3.0" height="5" fill="#000" fill-opacity="0.8" stroke="none"/>
<line x1="649" y1="337.9" x2="668.8" y2="337.9" stroke="#fff" stroke-width="0.7" stroke-opacity="0.8"/>
<line x1="652" y1="359.4" x2="667" y2="359.4" stroke="#fff" stroke-width="0.7" stroke-opacity="0.8"/>
<path d="M669.8 337.9 Q665.8 343.4 669.2 348.6 Q672 354 666.8 359.4" fill="none" stroke="#fff" stroke-width="0.7" stroke-opacity="0.85"/>
<line x1="648" y1="348.7" x2="672" y2="348.7" stroke="#fff" stroke-width="0.6" stroke-opacity="0.7" stroke-dasharray="5 1.2 1 1.2"/>
<line x1="640" y1="360" x2="656" y2="360" stroke="#fff" stroke-width="0.6" stroke-opacity="0.6"/>
<polyline points="485.6,381.6 485.6,419.7 655,419.7 655,381.6" fill="none" stroke="#fff" stroke-width="0.8" stroke-opacity="0.9"/>
<polyline points="481.6,365 481.6,410.3 513.8,410.3" fill="none" stroke="#fff" stroke-width="0.7" stroke-opacity="0.85"/>
<rect x="479.5" y="386.4" width="1.8999999999999773" height="1.8000000000000114" fill="#fff" fill-opacity="0.9" stroke="none"/>
<rect x="527.0" y="383" width="7.2000000000000455" height="22.80000000000001" fill="url(#hx)" fill-opacity="0.85" stroke="none"/>
<line x1="527.0" y1="388" x2="527.0" y2="405.8" stroke="#fff" stroke-width="0.7" stroke-opacity="0.9"/>
<line x1="534.2" y1="388" x2="534.2" y2="405.8" stroke="#fff" stroke-width="0.7" stroke-opacity="0.9"/>
<rect x="528.0" y="384" width="5.2000000000000455" height="5.600000000000023" fill="#fff" fill-opacity="0.45" stroke="none"/>
<polyline points="520.0,381.8 523.6,387.4 526.8000000000001,390" fill="none" stroke="#fff" stroke-width="0.7" stroke-opacity="0.85"/>
<polyline points="541.2,381.8 537.6,387.4 534.4,390" fill="none" stroke="#fff" stroke-width="0.7" stroke-opacity="0.85"/>
<circle cx="526.8000000000001" cy="386.2" r="1.5" fill="none" stroke="#fff" stroke-width="0.6" stroke-opacity="0.8"/>
<circle cx="534.4" cy="386.2" r="1.5" fill="none" stroke="#fff" stroke-width="0.6" stroke-opacity="0.8"/>
<rect x="576.3" y="383" width="7.2000000000000455" height="22.80000000000001" fill="url(#hx)" fill-opacity="0.85" stroke="none"/>
<line x1="576.3" y1="388" x2="576.3" y2="405.8" stroke="#fff" stroke-width="0.7" stroke-opacity="0.9"/>
<line x1="583.5" y1="388" x2="583.5" y2="405.8" stroke="#fff" stroke-width="0.7" stroke-opacity="0.9"/>
<rect x="577.3" y="384" width="5.2000000000000455" height="5.600000000000023" fill="#fff" fill-opacity="0.45" stroke="none"/>
<polyline points="569.3,381.8 572.9,387.4 576.1,390" fill="none" stroke="#fff" stroke-width="0.7" stroke-opacity="0.85"/>
<polyline points="590.5,381.8 586.9,387.4 583.6999999999999,390" fill="none" stroke="#fff" stroke-width="0.7" stroke-opacity="0.85"/>
<circle cx="576.1" cy="386.2" r="1.5" fill="none" stroke="#fff" stroke-width="0.6" stroke-opacity="0.8"/>
<circle cx="583.6999999999999" cy="386.2" r="1.5" fill="none" stroke="#fff" stroke-width="0.6" stroke-opacity="0.8"/>
<rect x="513.2" y="405.8" width="83.59999999999991" height="4.5" fill="url(#hx)" fill-opacity="0.9" stroke="none"/>
<rect x="513.1" y="405.8" width="83.79999999999995" height="11.5" fill="none" stroke="#fff" stroke-width="0.7" stroke-opacity="0.9"/>
<line x1="513.1" y1="410.3" x2="596.9" y2="410.3" stroke="#fff" stroke-width="0.7" stroke-opacity="0.9"/>
<polyline points="530.2,410.3 530.2,414.3 580.6,414.3 580.6,410.3" fill="none" stroke="#fff" stroke-width="0.7" stroke-opacity="0.9"/>
<line x1="519.7" y1="400.6" x2="519.7" y2="414.8" stroke="#fff" stroke-width="0.7" stroke-opacity="0.8"/>
<line x1="591" y1="400.6" x2="591" y2="414.8" stroke="#fff" stroke-width="0.7" stroke-opacity="0.8"/>
<path d="M543.5 381.6 V393.4 Q544 403.6 555.4 403.6 Q566.8 403.6 567.2 393.4 V381.6" fill="none" stroke="#fff" stroke-width="0.8" stroke-opacity="0.9"/>
<circle cx="555.3" cy="393.5" r="7.2" fill="none" stroke="#fff" stroke-width="0.7" stroke-opacity="0.8"/>
<circle cx="555.3" cy="393.5" r="4.2" fill="none" stroke="#fff" stroke-width="1.2" stroke-opacity="0.95"/>
<circle cx="555.3" cy="393.5" r="2.2" fill="none" stroke="#fff" stroke-width="0.8" stroke-opacity="0.9"/>
<line x1="547.6" y1="393.5" x2="563.4" y2="393.5" stroke="#fff" stroke-width="0.5" stroke-opacity="0.6"/>
<polygon points="555.4,411.4 556.8,413.6 554,413.6" fill="#fff" stroke="#fff" stroke-width="0.5" stroke-opacity="0.9"/>
<polygon points="555.4,415.2 556.8,417.4 554,417.4" fill="#fff" stroke="#fff" stroke-width="0.5" stroke-opacity="0.9"/>
<rect x="568.6" y="419" width="2.7999999999999545" height="1.3999999999999773" fill="#fff" fill-opacity="0.8" stroke="none"/>
<line x1="300.8" y1="418.1" x2="333.5" y2="418.1" stroke="#fff" stroke-width="0.8" stroke-opacity="0.9"/>
<line x1="300.8" y1="489.7" x2="333.5" y2="489.7" stroke="#fff" stroke-width="0.8" stroke-opacity="0.9"/>
<rect x="300.8" y="428.05" width="32.69999999999999" height="1.5" fill="#fff" fill-opacity="0.98" stroke="none"/>
<rect x="300.8" y="432.55" width="32.69999999999999" height="1.5" fill="#fff" fill-opacity="0.98" stroke="none"/>
<rect x="300.8" y="473.45" width="32.69999999999999" height="1.5" fill="#fff" fill-opacity="0.98" stroke="none"/>
<rect x="300.8" y="477.95" width="32.69999999999999" height="1.5" fill="#fff" fill-opacity="0.98" stroke="none"/>
<line x1="407.4" y1="418.1" x2="449.0" y2="418.1" stroke="#fff" stroke-width="0.8" stroke-opacity="0.9"/>
<line x1="407.4" y1="489.7" x2="449.0" y2="489.7" stroke="#fff" stroke-width="0.8" stroke-opacity="0.9"/>
<rect x="407.4" y="428.05" width="41.60000000000002" height="1.5" fill="#fff" fill-opacity="0.98" stroke="none"/>
<rect x="407.4" y="432.55" width="41.60000000000002" height="1.5" fill="#fff" fill-opacity="0.98" stroke="none"/>
<rect x="407.4" y="473.45" width="41.60000000000002" height="1.5" fill="#fff" fill-opacity="0.98" stroke="none"/>
<rect x="407.4" y="477.95" width="41.60000000000002" height="1.5" fill="#fff" fill-opacity="0.98" stroke="none"/>
<line x1="300.8" y1="418.1" x2="300.8" y2="489.7" stroke="#fff" stroke-width="0.8" stroke-opacity="0.9"/>
<line x1="449.0" y1="418.1" x2="449.0" y2="489.7" stroke="#fff" stroke-width="0.8" stroke-opacity="0.9"/>
<path d="M335 421.4 V414.8 H343.6 M349.4 414.8 H358 Q362 416.2 366.6 414.8 H374.6 Q381 416.2 390.4 414.8 M396 414.8 H406.4 V421.4" fill="none" stroke="#fff" stroke-width="0.8" stroke-opacity="0.9"/>
<line x1="333.5" y1="421.4" x2="407.2" y2="421.4" stroke="#fff" stroke-width="0.8" stroke-opacity="0.9"/>
<line x1="343.9" y1="414.6" x2="343.9" y2="421.4" stroke="#fff" stroke-width="1.1" stroke-opacity="0.95"/>
<line x1="349.2" y1="414.6" x2="349.2" y2="421.4" stroke="#fff" stroke-width="1.1" stroke-opacity="0.95"/>
<line x1="390.6" y1="414.6" x2="390.6" y2="421.4" stroke="#fff" stroke-width="1.1" stroke-opacity="0.95"/>
<line x1="395.9" y1="414.6" x2="395.9" y2="421.4" stroke="#fff" stroke-width="1.1" stroke-opacity="0.95"/>
<line x1="366.9" y1="415.4" x2="366.9" y2="421.4" stroke="#fff" stroke-width="0.8" stroke-opacity="0.9"/>
<line x1="374.3" y1="415.4" x2="374.3" y2="421.4" stroke="#fff" stroke-width="0.8" stroke-opacity="0.9"/>
<line x1="333.5" y1="421.4" x2="333.5" y2="436.3" stroke="#fff" stroke-width="0.8" stroke-opacity="0.85"/>
<line x1="337.9" y1="421.4" x2="337.9" y2="436.3" stroke="#fff" stroke-width="0.8" stroke-opacity="0.85"/>
<line x1="340.9" y1="421.4" x2="340.9" y2="436.3" stroke="#fff" stroke-width="0.8" stroke-opacity="0.85"/>
<line x1="349.1" y1="421.4" x2="349.1" y2="436.3" stroke="#fff" stroke-width="0.8" stroke-opacity="0.85"/>
<line x1="357.2" y1="421.4" x2="357.2" y2="436.3" stroke="#fff" stroke-width="0.8" stroke-opacity="0.85"/>
<line x1="365.4" y1="421.4" x2="365.4" y2="436.3" stroke="#fff" stroke-width="0.8" stroke-opacity="0.85"/>
<line x1="374.3" y1="421.4" x2="374.3" y2="436.3" stroke="#fff" stroke-width="0.8" stroke-opacity="0.85"/>
<line x1="382.5" y1="421.4" x2="382.5" y2="436.3" stroke="#fff" stroke-width="0.8" stroke-opacity="0.85"/>
<line x1="390.6" y1="421.4" x2="390.6" y2="436.3" stroke="#fff" stroke-width="0.8" stroke-opacity="0.85"/>
<line x1="395.8" y1="421.4" x2="395.8" y2="436.3" stroke="#fff" stroke-width="0.8" stroke-opacity="0.85"/>
<line x1="402.2" y1="421.4" x2="402.2" y2="436.3" stroke="#fff" stroke-width="0.8" stroke-opacity="0.85"/>
<line x1="407.2" y1="421.4" x2="407.2" y2="436.3" stroke="#fff" stroke-width="0.8" stroke-opacity="0.85"/>
<line x1="333.5" y1="421.4" x2="333.5" y2="486.4" stroke="#fff" stroke-width="0.8" stroke-opacity="0.9"/>
<line x1="337.9" y1="421.4" x2="337.9" y2="486.4" stroke="#fff" stroke-width="0.7" stroke-opacity="0.85"/>
<line x1="340.9" y1="421.4" x2="340.9" y2="486.4" stroke="#fff" stroke-width="0.7" stroke-opacity="0.85"/>
<line x1="407.2" y1="421.4" x2="407.2" y2="486.4" stroke="#fff" stroke-width="0.8" stroke-opacity="0.9"/>
<line x1="343" y1="436.3" x2="397.4" y2="436.3" stroke="#fff" stroke-width="0.8" stroke-opacity="0.9"/>
<line x1="349.1" y1="473" x2="349.1" y2="486.4" stroke="#fff" stroke-width="0.8" stroke-opacity="0.85"/>
<line x1="357.2" y1="473" x2="357.2" y2="486.4" stroke="#fff" stroke-width="0.8" stroke-opacity="0.85"/>
<line x1="365.4" y1="473" x2="365.4" y2="486.4" stroke="#fff" stroke-width="0.8" stroke-opacity="0.85"/>
<line x1="374.3" y1="473" x2="374.3" y2="486.4" stroke="#fff" stroke-width="0.8" stroke-opacity="0.85"/>
<line x1="382.5" y1="473" x2="382.5" y2="486.4" stroke="#fff" stroke-width="0.8" stroke-opacity="0.85"/>
<line x1="390.6" y1="473" x2="390.6" y2="486.4" stroke="#fff" stroke-width="0.8" stroke-opacity="0.85"/>
<line x1="395.8" y1="473" x2="395.8" y2="486.4" stroke="#fff" stroke-width="0.8" stroke-opacity="0.85"/>
<line x1="402.2" y1="473" x2="402.2" y2="486.4" stroke="#fff" stroke-width="0.8" stroke-opacity="0.85"/>
<line x1="407.2" y1="473" x2="407.2" y2="486.4" stroke="#fff" stroke-width="0.8" stroke-opacity="0.85"/>
<path d="M334.2 486.4 V493.5 H343.6 M349.6 493.5 H358 Q362 492.2 366.6 493.5 H374.6 M390.4 493.5 H396 M396 493.5 H406.4 V486.4" fill="none" stroke="#fff" stroke-width="0.8" stroke-opacity="0.9"/>
<line x1="333.5" y1="486.4" x2="407.2" y2="486.4" stroke="#fff" stroke-width="0.8" stroke-opacity="0.9"/>
<line x1="343.9" y1="486.4" x2="343.9" y2="493.6" stroke="#fff" stroke-width="1.2" stroke-opacity="0.95"/>
<line x1="349.8" y1="486.4" x2="349.8" y2="493.6" stroke="#fff" stroke-width="1.2" stroke-opacity="0.95"/>
<line x1="374.3" y1="486.4" x2="374.3" y2="493.6" stroke="#fff" stroke-width="1.2" stroke-opacity="0.95"/>
<line x1="390.6" y1="486.4" x2="390.6" y2="493.6" stroke="#fff" stroke-width="1.2" stroke-opacity="0.95"/>
<line x1="395.8" y1="486.4" x2="395.8" y2="493.6" stroke="#fff" stroke-width="1.2" stroke-opacity="0.95"/>
<path d="M348.4 436.2 H397.3 V470.4 Q397.2 473 394.6 473 H351 Q348.4 473 348.4 470.4 Z" fill="#000" stroke="#fff" stroke-width="0.8" stroke-opacity="0.9"/>
<rect x="396.4" y="435.4" width="5.800000000000011" height="37.0" fill="#9a9a9a" fill-opacity="0.8" stroke="none"/>
<line x1="396.3" y1="435.2" x2="396.3" y2="472.4" stroke="#fff" stroke-width="0.7" stroke-opacity="0.9"/>
<line x1="402.3" y1="435.2" x2="402.3" y2="472.4" stroke="#fff" stroke-width="0.7" stroke-opacity="0.9"/>
<line x1="399.3" y1="435.2" x2="399.3" y2="472.4" stroke="#fff" stroke-width="0.7" stroke-opacity="0.7"/>
<rect x="400" y="451.6" width="1.6000000000000227" height="3.0" fill="#fff" fill-opacity="0.9" stroke="none"/>
<rect x="343.1" y="438.2" width="5.399999999999977" height="30.400000000000034" fill="#000" stroke="#fff" stroke-width="0.8" stroke-opacity="0.9"/>
<rect x="340.5" y="442.8" width="2.6000000000000227" height="3.8000000000000114" fill="none" stroke="#fff" stroke-width="0.7" stroke-opacity="0.85"/>
<rect x="340.5" y="460.4" width="2.6000000000000227" height="3.8000000000000114" fill="none" stroke="#fff" stroke-width="0.7" stroke-opacity="0.85"/>
<rect x="348.6" y="443" width="23.0" height="21.100000000000023" fill="none" stroke="#fff" stroke-width="0.8" stroke-opacity="0.9"/>
<circle cx="359.8" cy="453.5" r="9.2" fill="none" stroke="#fff" stroke-width="0.9" stroke-opacity="0.95"/>
<line x1="359.8" y1="440.6" x2="359.8" y2="467" stroke="#fff" stroke-width="0.6" stroke-opacity="0.8" stroke-dasharray="4 1.2 1 1.2"/>
<path d="M370 478.2 H384.4 M377.2 474.6 V481.6 M375 481.6 H379.6" fill="none" stroke="#fff" stroke-width="1.0" stroke-opacity="0.9"/>
<rect x="374.6" y="476.8" width="5.399999999999977" height="2.8000000000000114" fill="#fff" fill-opacity="0.5" stroke="none"/>
<path d="M369.8 479 Q368.4 482 370.2 484 Q372.4 487 371 489.6" fill="none" stroke="#fff" stroke-width="1.3" stroke-opacity="0.85"/>
<circle cx="370.6" cy="485.6" r="1.4" fill="none" stroke="#fff" stroke-width="0.6" stroke-opacity="0.9"/>
<rect x="277" y="444.8" width="66.10000000000002" height="17.599999999999966" fill="#000" stroke="#fff" stroke-width="0.8" stroke-opacity="0.9"/>
<line x1="276" y1="453.5" x2="470" y2="453.5" stroke="#fff" stroke-width="0.6" stroke-opacity="0.75" stroke-dasharray="7 1.4 1.2 1.4"/>
<rect x="301.6" y="439.2" width="7.399999999999977" height="5.600000000000023" fill="none" stroke="#fff" stroke-width="0.7" stroke-opacity="0.9"/>
<circle cx="305.3" cy="442.0" r="1.5" fill="none" stroke="#fff" stroke-width="0.6" stroke-opacity="0.9"/>
<line x1="305.3" y1="439.59999999999997" x2="305.3" y2="444.4" stroke="#fff" stroke-width="0.5" stroke-opacity="0.7"/>
<rect x="301.6" y="463" width="7.399999999999977" height="5.600000000000023" fill="none" stroke="#fff" stroke-width="0.7" stroke-opacity="0.9"/>
<circle cx="305.3" cy="465.8" r="1.5" fill="none" stroke="#fff" stroke-width="0.6" stroke-opacity="0.9"/>
<line x1="305.3" y1="463.4" x2="305.3" y2="468.2" stroke="#fff" stroke-width="0.5" stroke-opacity="0.7"/>
<rect x="407.4" y="450" width="21.600000000000023" height="7.600000000000023" fill="none" stroke="#fff" stroke-width="0.7" stroke-opacity="0.9"/>
<line x1="428" y1="450" x2="428" y2="457.6" stroke="#fff" stroke-width="0.6" stroke-opacity="0.7"/>
<rect x="430.6" y="444.8" width="19.799999999999955" height="17.599999999999966" fill="#000" stroke="#fff" stroke-width="0.8" stroke-opacity="0.9"/>
<line x1="432.4" y1="444.8" x2="432.4" y2="462.4" stroke="#fff" stroke-width="0.6" stroke-opacity="0.7"/>
<rect x="436.8" y="439.2" width="9.0" height="5.600000000000023" fill="none" stroke="#fff" stroke-width="0.7" stroke-opacity="0.9"/>
<circle cx="439.4" cy="442.0" r="1.3" fill="none" stroke="#fff" stroke-width="0.6" stroke-opacity="0.9"/>
<line x1="441.6" y1="439.59999999999997" x2="441.6" y2="444.4" stroke="#fff" stroke-width="0.5" stroke-opacity="0.7"/>
<rect x="442.6" y="441.4" width="2.0" height="1.1999999999999886" fill="#fff" fill-opacity="0.7" stroke="none"/>
<rect x="436.8" y="463" width="9.0" height="5.600000000000023" fill="none" stroke="#fff" stroke-width="0.7" stroke-opacity="0.9"/>
<circle cx="439.4" cy="465.8" r="1.3" fill="none" stroke="#fff" stroke-width="0.6" stroke-opacity="0.9"/>
<line x1="441.6" y1="463.4" x2="441.6" y2="468.2" stroke="#fff" stroke-width="0.5" stroke-opacity="0.7"/>
<rect x="442.6" y="465.2" width="2.0" height="1.1999999999999886" fill="#fff" fill-opacity="0.7" stroke="none"/>
<rect x="449.8" y="438.9" width="20.0" height="50.5" fill="none" stroke="#fff" stroke-width="0.8" stroke-opacity="0.9"/>
<line x1="452.4" y1="438.9" x2="452.4" y2="489.4" stroke="#fff" stroke-width="0.7" stroke-opacity="0.85"/>
<rect x="455" y="439.2" width="14.600000000000023" height="1.8000000000000114" fill="url(#hx)" fill-opacity="0.8" stroke="none"/>
<rect x="455" y="487.4" width="14.600000000000023" height="1.8000000000000114" fill="url(#hx)" fill-opacity="0.8" stroke="none"/>
<rect x="466.6" y="439.2" width="3.0" height="50.0" fill="url(#hx)" fill-opacity="0.75" stroke="none"/>
<line x1="466.4" y1="441" x2="466.4" y2="487.4" stroke="#fff" stroke-width="0.7" stroke-opacity="0.9"/>
<path d="M455.6 442.6 H463 V454 H455.6 Z" fill="none" stroke="#fff" stroke-width="0.8" stroke-opacity="0.9"/>
<rect x="456" y="443" width="6.600000000000023" height="10.600000000000023" fill="url(#hd)" fill-opacity="0.8" stroke="none"/>
<rect x="456" y="443" width="6.600000000000023" height="10.600000000000023" fill="#aaa" fill-opacity="0.4" stroke="none"/>
<rect x="456.4" y="455.6" width="6.2000000000000455" height="8.599999999999966" fill="none" stroke="#fff" stroke-width="0.7" stroke-opacity="0.9"/>
<rect x="457.4" y="460" width="4.2000000000000455" height="3" fill="#fff" fill-opacity="0.5" stroke="none"/>
<rect x="454.6" y="466.6" width="8.0" height="6.0" fill="#fff" fill-opacity="0.45" stroke="none"/>
<rect x="454.6" y="466.6" width="8.0" height="6.0" fill="url(#hx)" fill-opacity="0.7" stroke="none"/>
<rect x="453.6" y="472.4" width="1.599999999999966" height="6.2000000000000455" fill="#fff" fill-opacity="0.9" stroke="none"/>
<path d="M453.4 444 Q455.4 458 453.6 470 M453.6 480 Q455 486 458 487.4" fill="none" stroke="#fff" stroke-width="0.7" stroke-opacity="0.85"/>
<circle cx="467.8" cy="451.6" r="1.2" fill="none" stroke="#fff" stroke-width="0.6" stroke-opacity="0.9"/>
<circle cx="467.8" cy="461" r="1.2" fill="none" stroke="#fff" stroke-width="0.6" stroke-opacity="0.9"/>
<circle cx="467.8" cy="476.4" r="1.2" fill="none" stroke="#fff" stroke-width="0.6" stroke-opacity="0.9"/>
<rect x="470.6" y="459" width="25.899999999999977" height="20.69999999999999" fill="none" stroke="#fff" stroke-width="0.8" stroke-opacity="0.9"/>
<line x1="462" y1="469.6" x2="498.6" y2="469.6" stroke="#fff" stroke-width="0.6" stroke-opacity="0.75" stroke-dasharray="6 1.4 1.2 1.4"/>
<line x1="462" y1="480.6" x2="474" y2="480.6" stroke="#fff" stroke-width="0.6" stroke-opacity="0.7"/>
<line x1="468" y1="456.6" x2="476" y2="458.8" stroke="#fff" stroke-width="0.6" stroke-opacity="0.7"/>
<rect x="529" y="440.7" width="15.600000000000023" height="2.3000000000000114" fill="#fff" fill-opacity="0.95" stroke="none"/>
<rect x="524.4" y="447.8" width="30.600000000000023" height="1.6999999999999886" fill="#fff" fill-opacity="0.95" stroke="none"/>
<rect x="524.4" y="450.7" width="33.60000000000002" height="1.6000000000000227" fill="#fff" fill-opacity="0.95" stroke="none"/>
<rect x="524.4" y="453.0" width="25.399999999999977" height="1.6000000000000227" fill="#fff" fill-opacity="0.95" stroke="none"/>
<rect x="523.8" y="455.6" width="28.200000000000045" height="1.5" fill="#fff" fill-opacity="0.95" stroke="none"/>
<rect x="575.7" y="447.1" width="48.89999999999998" height="49.299999999999955" fill="#fff" fill-opacity="0.04" stroke="none"/>
<line x1="575.7" y1="447.1" x2="624.6" y2="447.1" stroke="#fff" stroke-width="0.72" stroke-opacity="0.95"/>
<line x1="575.7" y1="448.65" x2="624.6" y2="448.65" stroke="#fff" stroke-width="0.72" stroke-opacity="0.95"/>
<line x1="575.7" y1="450.2" x2="624.6" y2="450.2" stroke="#fff" stroke-width="0.72" stroke-opacity="0.95"/>
<line x1="575.7" y1="451.75" x2="624.6" y2="451.75" stroke="#fff" stroke-width="0.72" stroke-opacity="0.95"/>
<line x1="575.7" y1="453.3" x2="624.6" y2="453.3" stroke="#fff" stroke-width="0.72" stroke-opacity="0.95"/>
<line x1="575.7" y1="454.85" x2="624.6" y2="454.85" stroke="#fff" stroke-width="0.72" stroke-opacity="0.95"/>
<line x1="575.7" y1="456.4" x2="624.6" y2="456.4" stroke="#fff" stroke-width="0.72" stroke-opacity="0.95"/>
<line x1="575.7" y1="457.95" x2="624.6" y2="457.95" stroke="#fff" stroke-width="0.72" stroke-opacity="0.95"/>
<line x1="575.7" y1="459.5" x2="624.6" y2="459.5" stroke="#fff" stroke-width="0.72" stroke-opacity="0.95"/>
<line x1="575.7" y1="461.05" x2="624.6" y2="461.05" stroke="#fff" stroke-width="0.72" stroke-opacity="0.95"/>
<line x1="575.7" y1="462.6" x2="624.6" y2="462.6" stroke="#fff" stroke-width="0.72" stroke-opacity="0.95"/>
<line x1="575.7" y1="464.15" x2="624.6" y2="464.15" stroke="#fff" stroke-width="0.72" stroke-opacity="0.95"/>
<line x1="575.7" y1="465.7" x2="624.6" y2="465.7" stroke="#fff" stroke-width="0.72" stroke-opacity="0.95"/>
<line x1="575.7" y1="467.25" x2="624.6" y2="467.25" stroke="#fff" stroke-width="0.72" stroke-opacity="0.95"/>
<line x1="575.7" y1="468.8" x2="624.6" y2="468.8" stroke="#fff" stroke-width="0.72" stroke-opacity="0.95"/>
<line x1="575.7" y1="470.35" x2="624.6" y2="470.35" stroke="#fff" stroke-width="0.72" stroke-opacity="0.95"/>
<line x1="575.7" y1="471.9" x2="624.6" y2="471.9" stroke="#fff" stroke-width="0.72" stroke-opacity="0.95"/>
<line x1="575.7" y1="473.45" x2="624.6" y2="473.45" stroke="#fff" stroke-width="0.72" stroke-opacity="0.95"/>
<line x1="575.7" y1="475.0" x2="624.6" y2="475.0" stroke="#fff" stroke-width="0.72" stroke-opacity="0.95"/>
<line x1="575.7" y1="476.55" x2="624.6" y2="476.55" stroke="#fff" stroke-width="0.72" stroke-opacity="0.95"/>
<line x1="575.7" y1="478.1" x2="624.6" y2="478.1" stroke="#fff" stroke-width="0.72" stroke-opacity="0.95"/>
<line x1="575.7" y1="479.65" x2="624.6" y2="479.65" stroke="#fff" stroke-width="0.72" stroke-opacity="0.95"/>
<line x1="575.7" y1="481.2" x2="624.6" y2="481.2" stroke="#fff" stroke-width="0.72" stroke-opacity="0.95"/>
<line x1="575.7" y1="482.75" x2="624.6" y2="482.75" stroke="#fff" stroke-width="0.72" stroke-opacity="0.95"/>
<line x1="575.7" y1="484.3" x2="624.6" y2="484.3" stroke="#fff" stroke-width="0.72" stroke-opacity="0.95"/>
<line x1="575.7" y1="485.85" x2="624.6" y2="485.85" stroke="#fff" stroke-width="0.72" stroke-opacity="0.95"/>
<line x1="575.7" y1="487.4" x2="624.6" y2="487.4" stroke="#fff" stroke-width="0.72" stroke-opacity="0.95"/>
<line x1="575.7" y1="488.95" x2="624.6" y2="488.95" stroke="#fff" stroke-width="0.72" stroke-opacity="0.95"/>
<line x1="575.7" y1="490.5" x2="624.6" y2="490.5" stroke="#fff" stroke-width="0.72" stroke-opacity="0.95"/>
<line x1="575.7" y1="492.05" x2="624.6" y2="492.05" stroke="#fff" stroke-width="0.72" stroke-opacity="0.95"/>
<line x1="575.7" y1="493.6" x2="624.6" y2="493.6" stroke="#fff" stroke-width="0.72" stroke-opacity="0.95"/>
<line x1="575.7" y1="495.15" x2="624.6" y2="495.15" stroke="#fff" stroke-width="0.72" stroke-opacity="0.95"/>
<line x1="578.6" y1="447.1" x2="578.6" y2="496.4" stroke="#fff" stroke-width="0.8" stroke-opacity="0.95"/>
<line x1="594.4" y1="447.1" x2="594.4" y2="496.4" stroke="#fff" stroke-width="0.8" stroke-opacity="0.95"/>
<line x1="596.4" y1="447.1" x2="596.4" y2="496.4" stroke="#fff" stroke-width="0.8" stroke-opacity="0.95"/>
<line x1="613.4" y1="447.1" x2="613.4" y2="496.4" stroke="#fff" stroke-width="0.8" stroke-opacity="0.95"/>
<rect x="575.7" y="447.1" width="48.89999999999998" height="49.299999999999955" fill="none" stroke="#fff" stroke-width="0.8" stroke-opacity="0.95"/>
<rect x="582.95" y="448.4" width="7.11" height="1.8" rx="1.2" fill="#fff" fill-opacity="0.95"/>
<rect x="580.58" y="451.4" width="11.85" height="3.8" rx="1.2" fill="#fff" fill-opacity="0.95"/>
<rect x="582.15" y="455.2" width="8.69" height="3.2" rx="1.2" fill="#fff" fill-opacity="0.95"/>
<rect x="583.34" y="458.6" width="6.32" height="3.0" rx="1.2" fill="#fff" fill-opacity="0.95"/>
<rect x="583.74" y="465.2" width="5.53" height="1.4" rx="1.2" fill="#fff" fill-opacity="0.95"/>
<rect x="581.76" y="470.2" width="9.48" height="3.6" rx="1.2" fill="#fff" fill-opacity="0.95"/>
<rect x="583.34" y="473.8" width="6.32" height="2.2" rx="1.2" fill="#fff" fill-opacity="0.95"/>
<rect x="583.74" y="477.6" width="5.53" height="2.0" rx="1.2" fill="#fff" fill-opacity="0.95"/>
<rect x="582.15" y="480.6" width="8.69" height="5.4" rx="1.2" fill="#fff" fill-opacity="0.95"/>
<rect x="581.76" y="486" width="9.48" height="4.4" rx="1.2" fill="#fff" fill-opacity="0.95"/>
<rect x="582.55" y="490.6" width="7.9" height="2.0" rx="1.2" fill="#fff" fill-opacity="0.95"/>
<rect x="583.74" y="493.6" width="5.53" height="2.2" rx="1.2" fill="#fff" fill-opacity="0.95"/>
<rect x="603.37" y="449" width="3.06" height="4" rx="1.2" fill="#fff" fill-opacity="0.95"/>
<rect x="603.71" y="453" width="2.38" height="9" rx="1.2" fill="#fff" fill-opacity="0.95"/>
<rect x="603.71" y="466" width="2.38" height="10" rx="1.2" fill="#fff" fill-opacity="0.95"/>
<rect x="603.88" y="478" width="2.04" height="8" rx="1.2" fill="#fff" fill-opacity="0.95"/>
<rect x="603.71" y="488" width="2.38" height="6" rx="1.2" fill="#fff" fill-opacity="0.95"/>
<rect x="614.8" y="449.2" width="8.4" height="4.2" rx="1.2" fill="#fff" fill-opacity="0.95"/>
<rect x="616.2" y="467.8" width="5.6" height="1.2" rx="1.2" fill="#fff" fill-opacity="0.95"/>
<rect x="613.96" y="469.8" width="10.08" height="2.6" rx="1.2" fill="#fff" fill-opacity="0.95"/>
<rect x="614.52" y="488" width="8.96" height="2.8" rx="1.2" fill="#fff" fill-opacity="0.95"/>
<rect x="616.2" y="494.2" width="5.6" height="1.8" rx="1.2" fill="#fff" fill-opacity="0.95"/>
<rect x="581.2" y="462.2" width="8.399999999999977" height="1.8000000000000114" fill="#18d8e8" fill-opacity="1" stroke="none"/>
<rect x="582" y="467.6" width="8.399999999999977" height="2.599999999999966" fill="#18d8e8" fill-opacity="1" stroke="none"/>
<rect x="624.6" y="424.4" width="48.19999999999993" height="72.0" fill="#fff" fill-opacity="0.04" stroke="none"/>
<line x1="624.6" y1="424.4" x2="672.8" y2="424.4" stroke="#fff" stroke-width="0.72" stroke-opacity="0.95"/>
<line x1="624.6" y1="425.95" x2="672.8" y2="425.95" stroke="#fff" stroke-width="0.72" stroke-opacity="0.95"/>
<line x1="624.6" y1="427.5" x2="672.8" y2="427.5" stroke="#fff" stroke-width="0.72" stroke-opacity="0.95"/>
<line x1="624.6" y1="429.05" x2="672.8" y2="429.05" stroke="#fff" stroke-width="0.72" stroke-opacity="0.95"/>
<line x1="624.6" y1="430.6" x2="672.8" y2="430.6" stroke="#fff" stroke-width="0.72" stroke-opacity="0.95"/>
<line x1="624.6" y1="432.15" x2="672.8" y2="432.15" stroke="#fff" stroke-width="0.72" stroke-opacity="0.95"/>
<line x1="624.6" y1="433.7" x2="672.8" y2="433.7" stroke="#fff" stroke-width="0.72" stroke-opacity="0.95"/>
<line x1="624.6" y1="435.25" x2="672.8" y2="435.25" stroke="#fff" stroke-width="0.72" stroke-opacity="0.95"/>
<line x1="624.6" y1="436.8" x2="672.8" y2="436.8" stroke="#fff" stroke-width="0.72" stroke-opacity="0.95"/>
<line x1="624.6" y1="438.35" x2="672.8" y2="438.35" stroke="#fff" stroke-width="0.72" stroke-opacity="0.95"/>
<line x1="624.6" y1="439.9" x2="672.8" y2="439.9" stroke="#fff" stroke-width="0.72" stroke-opacity="0.95"/>
<line x1="624.6" y1="441.45" x2="672.8" y2="441.45" stroke="#fff" stroke-width="0.72" stroke-opacity="0.95"/>
<line x1="624.6" y1="443.0" x2="672.8" y2="443.0" stroke="#fff" stroke-width="0.72" stroke-opacity="0.95"/>
<line x1="624.6" y1="444.55" x2="672.8" y2="444.55" stroke="#fff" stroke-width="0.72" stroke-opacity="0.95"/>
<line x1="624.6" y1="446.1" x2="672.8" y2="446.1" stroke="#fff" stroke-width="0.72" stroke-opacity="0.95"/>
<line x1="624.6" y1="447.65" x2="672.8" y2="447.65" stroke="#fff" stroke-width="0.72" stroke-opacity="0.95"/>
<line x1="624.6" y1="449.2" x2="672.8" y2="449.2" stroke="#fff" stroke-width="0.72" stroke-opacity="0.95"/>
<line x1="624.6" y1="450.75" x2="672.8" y2="450.75" stroke="#fff" stroke-width="0.72" stroke-opacity="0.95"/>
<line x1="624.6" y1="452.3" x2="672.8" y2="452.3" stroke="#fff" stroke-width="0.72" stroke-opacity="0.95"/>
<line x1="624.6" y1="453.85" x2="672.8" y2="453.85" stroke="#fff" stroke-width="0.72" stroke-opacity="0.95"/>
<line x1="624.6" y1="455.4" x2="672.8" y2="455.4" stroke="#fff" stroke-width="0.72" stroke-opacity="0.95"/>
<line x1="624.6" y1="456.95" x2="672.8" y2="456.95" stroke="#fff" stroke-width="0.72" stroke-opacity="0.95"/>
<line x1="624.6" y1="458.5" x2="672.8" y2="458.5" stroke="#fff" stroke-width="0.72" stroke-opacity="0.95"/>
<line x1="624.6" y1="460.05" x2="672.8" y2="460.05" stroke="#fff" stroke-width="0.72" stroke-opacity="0.95"/>
<line x1="624.6" y1="461.6" x2="672.8" y2="461.6" stroke="#fff" stroke-width="0.72" stroke-opacity="0.95"/>
<line x1="624.6" y1="463.15" x2="672.8" y2="463.15" stroke="#fff" stroke-width="0.72" stroke-opacity="0.95"/>
<line x1="624.6" y1="464.7" x2="672.8" y2="464.7" stroke="#fff" stroke-width="0.72" stroke-opacity="0.95"/>
<line x1="624.6" y1="466.25" x2="672.8" y2="466.25" stroke="#fff" stroke-width="0.72" stroke-opacity="0.95"/>
<line x1="624.6" y1="467.8" x2="672.8" y2="467.8" stroke="#fff" stroke-width="0.72" stroke-opacity="0.95"/>
<line x1="624.6" y1="469.35" x2="672.8" y2="469.35" stroke="#fff" stroke-width="0.72" stroke-opacity="0.95"/>
<line x1="624.6" y1="470.9" x2="672.8" y2="470.9" stroke="#fff" stroke-width="0.72" stroke-opacity="0.95"/>
<line x1="624.6" y1="472.45" x2="672.8" y2="472.45" stroke="#fff" stroke-width="0.72" stroke-opacity="0.95"/>
<line x1="624.6" y1="474.0" x2="672.8" y2="474.0" stroke="#fff" stroke-width="0.72" stroke-opacity="0.95"/>
<line x1="624.6" y1="475.55" x2="672.8" y2="475.55" stroke="#fff" stroke-width="0.72" stroke-opacity="0.95"/>
<line x1="624.6" y1="477.1" x2="672.8" y2="477.1" stroke="#fff" stroke-width="0.72" stroke-opacity="0.95"/>
<line x1="624.6" y1="478.65" x2="672.8" y2="478.65" stroke="#fff" stroke-width="0.72" stroke-opacity="0.95"/>
<line x1="624.6" y1="480.2" x2="672.8" y2="480.2" stroke="#fff" stroke-width="0.72" stroke-opacity="0.95"/>
<line x1="624.6" y1="481.75" x2="672.8" y2="481.75" stroke="#fff" stroke-width="0.72" stroke-opacity="0.95"/>
<line x1="624.6" y1="483.3" x2="672.8" y2="483.3" stroke="#fff" stroke-width="0.72" stroke-opacity="0.95"/>
<line x1="624.6" y1="484.85" x2="672.8" y2="484.85" stroke="#fff" stroke-width="0.72" stroke-opacity="0.95"/>
<line x1="624.6" y1="486.4" x2="672.8" y2="486.4" stroke="#fff" stroke-width="0.72" stroke-opacity="0.95"/>
<line x1="624.6" y1="487.95" x2="672.8" y2="487.95" stroke="#fff" stroke-width="0.72" stroke-opacity="0.95"/>
<line x1="624.6" y1="489.5" x2="672.8" y2="489.5" stroke="#fff" stroke-width="0.72" stroke-opacity="0.95"/>
<line x1="624.6" y1="491.05" x2="672.8" y2="491.05" stroke="#fff" stroke-width="0.72" stroke-opacity="0.95"/>
<line x1="624.6" y1="492.6" x2="672.8" y2="492.6" stroke="#fff" stroke-width="0.72" stroke-opacity="0.95"/>
<line x1="624.6" y1="494.15" x2="672.8" y2="494.15" stroke="#fff" stroke-width="0.72" stroke-opacity="0.95"/>
<line x1="624.6" y1="495.7" x2="672.8" y2="495.7" stroke="#fff" stroke-width="0.72" stroke-opacity="0.95"/>
<line x1="627.5" y1="424.4" x2="627.5" y2="496.4" stroke="#fff" stroke-width="0.8" stroke-opacity="0.95"/>
<line x1="641.7" y1="424.4" x2="641.7" y2="496.4" stroke="#fff" stroke-width="0.8" stroke-opacity="0.95"/>
<line x1="644.6" y1="424.4" x2="644.6" y2="496.4" stroke="#fff" stroke-width="0.8" stroke-opacity="0.95"/>
<line x1="658.7" y1="424.4" x2="658.7" y2="496.4" stroke="#fff" stroke-width="0.8" stroke-opacity="0.95"/>
<rect x="624.6" y="424.4" width="48.19999999999993" height="72.0" fill="none" stroke="#fff" stroke-width="0.8" stroke-opacity="0.95"/>
<rect x="631.76" y="425.6" width="5.68" height="1.6" rx="1.2" fill="#fff" fill-opacity="0.95"/>
<rect x="631.05" y="429.6" width="7.1" height="3.0" rx="1.2" fill="#fff" fill-opacity="0.95"/>
<rect x="629.63" y="433.4" width="9.94" height="2.6" rx="1.2" fill="#fff" fill-opacity="0.95"/>
<rect x="629.27" y="437" width="10.65" height="4.4" rx="1.2" fill="#fff" fill-opacity="0.95"/>
<rect x="630.34" y="443.4" width="8.52" height="2.2" rx="1.2" fill="#fff" fill-opacity="0.95"/>
<rect x="628.92" y="445.6" width="11.36" height="4.8" rx="1.2" fill="#fff" fill-opacity="0.95"/>
<rect x="631.05" y="452" width="7.1" height="2" rx="1.2" fill="#fff" fill-opacity="0.95"/>
<rect x="630.34" y="455" width="8.52" height="4" rx="1.2" fill="#fff" fill-opacity="0.95"/>
<rect x="629.63" y="459" width="9.94" height="9" rx="1.2" fill="#fff" fill-opacity="0.95"/>
<rect x="629.27" y="468" width="10.65" height="4" rx="1.2" fill="#fff" fill-opacity="0.95"/>
<rect x="628.92" y="472.6" width="11.36" height="3.0" rx="1.2" fill="#fff" fill-opacity="0.95"/>
<rect x="630.34" y="477.6" width="8.52" height="2.4" rx="1.2" fill="#fff" fill-opacity="0.95"/>
<rect x="628.57" y="480" width="12.07" height="7" rx="1.2" fill="#fff" fill-opacity="0.95"/>
<rect x="630.34" y="487" width="8.52" height="2.6" rx="1.2" fill="#fff" fill-opacity="0.95"/>
<rect x="628.21" y="490.6" width="12.78" height="1.8" rx="1.2" fill="#fff" fill-opacity="0.95"/>
<rect x="628.92" y="493" width="11.36" height="2.6" rx="1.2" fill="#fff" fill-opacity="0.95"/>
<rect x="650.66" y="425" width="1.97" height="5" rx="1.2" fill="#fff" fill-opacity="0.95"/>
<rect x="650.8" y="436" width="1.69" height="8" rx="1.2" fill="#fff" fill-opacity="0.95"/>
<rect x="650.66" y="446" width="1.97" height="5" rx="1.2" fill="#fff" fill-opacity="0.95"/>
<rect x="650.24" y="459" width="2.82" height="11" rx="1.2" fill="#fff" fill-opacity="0.95"/>
<rect x="650.52" y="476" width="2.26" height="7" rx="1.2" fill="#fff" fill-opacity="0.95"/>
<rect x="650.1" y="484" width="3.1" height="7" rx="1.2" fill="#fff" fill-opacity="0.95"/>
<rect x="663.63" y="425.4" width="4.23" height="1.2" rx="1.2" fill="#fff" fill-opacity="0.95"/>
<rect x="660.46" y="443.6" width="10.57" height="1.6" rx="1.2" fill="#fff" fill-opacity="0.95"/>
<rect x="660.11" y="446.2" width="11.28" height="2.4" rx="1.2" fill="#fff" fill-opacity="0.95"/>
<rect x="662.23" y="464" width="7.05" height="1.8" rx="1.2" fill="#fff" fill-opacity="0.95"/>
<rect x="659.05" y="474.4" width="13.39" height="2.2" rx="1.2" fill="#fff" fill-opacity="0.95"/>
<rect x="662.23" y="481.4" width="7.05" height="2.0" rx="1.2" fill="#fff" fill-opacity="0.95"/>
<rect x="660.11" y="483.4" width="11.28" height="3.2" rx="1.2" fill="#fff" fill-opacity="0.95"/>
<rect x="662.23" y="489" width="7.05" height="1.8" rx="1.2" fill="#fff" fill-opacity="0.95"/>
<rect x="660.82" y="491" width="9.87" height="2.6" rx="1.2" fill="#fff" fill-opacity="0.95"/>
<rect x="650.3" y="453.6" width="1.5" height="2.0" fill="#18c8d8" fill-opacity="1" stroke="none"/>
<rect x="624.8" y="490.6" width="33.60000000000002" height="5.0" fill="#fff" fill-opacity="0.55" stroke="none"/>
<rect x="641.7" y="425" width="2.8999999999999773" height="67" fill="#fff" fill-opacity="0.25" stroke="none"/>
<line x1="397.4" y1="255.6" x2="434.2" y2="251.7" stroke="#fff" stroke-width="0.7" stroke-opacity="0.85"/>
<line x1="434.2" y1="251.7" x2="442.2" y2="251.7" stroke="#fff" stroke-width="0.7" stroke-opacity="0.85"/>
<rect x="437.4" y="249.2" width="2.8000000000000114" height="2.4000000000000057" fill="#fff" fill-opacity="0.85" stroke="none"/>
<line x1="363.4" y1="261.7" x2="434.2" y2="255.5" stroke="#fff" stroke-width="0.7" stroke-opacity="0.85"/>
<line x1="434.2" y1="255.5" x2="442.2" y2="255.5" stroke="#fff" stroke-width="0.7" stroke-opacity="0.85"/>
<rect x="437.4" y="253.0" width="2.8000000000000114" height="2.4000000000000057" fill="#fff" fill-opacity="0.85" stroke="none"/>
<line x1="367" y1="266.9" x2="434.2" y2="259.8" stroke="#fff" stroke-width="0.7" stroke-opacity="0.85"/>
<line x1="434.2" y1="259.8" x2="442.2" y2="259.8" stroke="#fff" stroke-width="0.7" stroke-opacity="0.85"/>
<rect x="437.4" y="257.3" width="2.8000000000000114" height="2.3999999999999773" fill="#fff" fill-opacity="0.85" stroke="none"/>
<line x1="368" y1="270.6" x2="434.2" y2="263.5" stroke="#fff" stroke-width="0.7" stroke-opacity="0.85"/>
<line x1="434.2" y1="263.5" x2="442.2" y2="263.5" stroke="#fff" stroke-width="0.7" stroke-opacity="0.85"/>
<rect x="437.4" y="261.0" width="2.8000000000000114" height="2.3999999999999773" fill="#fff" fill-opacity="0.85" stroke="none"/>
<line x1="379" y1="283" x2="434.2" y2="274.2" stroke="#fff" stroke-width="0.7" stroke-opacity="0.85"/>
<line x1="434.2" y1="274.2" x2="442.2" y2="274.2" stroke="#fff" stroke-width="0.7" stroke-opacity="0.85"/>
<rect x="437.4" y="271.7" width="2.8000000000000114" height="2.400000000000034" fill="#fff" fill-opacity="0.85" stroke="none"/>
<line x1="343" y1="307" x2="434.2" y2="280.1" stroke="#fff" stroke-width="0.7" stroke-opacity="0.85"/>
<line x1="434.2" y1="280.1" x2="442.2" y2="280.1" stroke="#fff" stroke-width="0.7" stroke-opacity="0.85"/>
<rect x="437.4" y="277.6" width="2.8000000000000114" height="2.3999999999999773" fill="#fff" fill-opacity="0.85" stroke="none"/>
<line x1="368" y1="312.6" x2="434.2" y2="287.2" stroke="#fff" stroke-width="0.7" stroke-opacity="0.85"/>
<line x1="434.2" y1="287.2" x2="442.2" y2="287.2" stroke="#fff" stroke-width="0.7" stroke-opacity="0.85"/>
<rect x="437.4" y="284.7" width="2.8000000000000114" height="2.400000000000034" fill="#fff" fill-opacity="0.85" stroke="none"/>
<line x1="368.4" y1="319.3" x2="434.2" y2="292.9" stroke="#fff" stroke-width="0.7" stroke-opacity="0.85"/>
<line x1="434.2" y1="292.9" x2="442.2" y2="292.9" stroke="#fff" stroke-width="0.7" stroke-opacity="0.85"/>
<rect x="437.4" y="290.4" width="2.8000000000000114" height="2.400000000000034" fill="#fff" fill-opacity="0.85" stroke="none"/>
<line x1="398.6" y1="328.2" x2="434.2" y2="300.6" stroke="#fff" stroke-width="0.7" stroke-opacity="0.85"/>
<line x1="434.2" y1="300.6" x2="442.2" y2="300.6" stroke="#fff" stroke-width="0.7" stroke-opacity="0.85"/>
<rect x="437.4" y="298.1" width="2.8000000000000114" height="2.3999999999999773" fill="#fff" fill-opacity="0.85" stroke="none"/>
<line x1="399.4" y1="331.9" x2="434.2" y2="308.1" stroke="#fff" stroke-width="0.7" stroke-opacity="0.85"/>
<line x1="434.2" y1="308.1" x2="442.2" y2="308.1" stroke="#fff" stroke-width="0.7" stroke-opacity="0.85"/>
<rect x="437.4" y="305.6" width="2.8000000000000114" height="2.3999999999999773" fill="#fff" fill-opacity="0.85" stroke="none"/>
<line x1="394.9" y1="343" x2="434.2" y2="320.2" stroke="#fff" stroke-width="0.7" stroke-opacity="0.85"/>
<line x1="434.2" y1="320.2" x2="442.2" y2="320.2" stroke="#fff" stroke-width="0.7" stroke-opacity="0.85"/>
<rect x="437.4" y="317.7" width="2.8000000000000114" height="2.400000000000034" fill="#fff" fill-opacity="0.85" stroke="none"/>
<line x1="409.8" y1="346" x2="434.2" y2="330.3" stroke="#fff" stroke-width="0.7" stroke-opacity="0.85"/>
<line x1="434.2" y1="330.3" x2="442.2" y2="330.3" stroke="#fff" stroke-width="0.7" stroke-opacity="0.85"/>
<rect x="437.4" y="327.8" width="2.8000000000000114" height="2.3999999999999773" fill="#fff" fill-opacity="0.85" stroke="none"/>
<line x1="397.2" y1="366.8" x2="434.2" y2="346.2" stroke="#fff" stroke-width="0.7" stroke-opacity="0.85"/>
<line x1="434.2" y1="346.2" x2="442.2" y2="346.2" stroke="#fff" stroke-width="0.7" stroke-opacity="0.85"/>
<rect x="437.4" y="343.7" width="2.8000000000000114" height="2.400000000000034" fill="#fff" fill-opacity="0.85" stroke="none"/>
<line x1="397.9" y1="369.8" x2="434.2" y2="358.1" stroke="#fff" stroke-width="0.7" stroke-opacity="0.85"/>
<line x1="434.2" y1="358.1" x2="442.2" y2="358.1" stroke="#fff" stroke-width="0.7" stroke-opacity="0.85"/>
<rect x="437.4" y="355.6" width="2.8000000000000114" height="2.3999999999999773" fill="#fff" fill-opacity="0.85" stroke="none"/>
<line x1="392" y1="374" x2="434.2" y2="361.5" stroke="#fff" stroke-width="0.7" stroke-opacity="0.85"/>
<line x1="434.2" y1="361.5" x2="442.2" y2="361.5" stroke="#fff" stroke-width="0.7" stroke-opacity="0.85"/>
<rect x="437.4" y="359.0" width="2.8000000000000114" height="2.3999999999999773" fill="#fff" fill-opacity="0.85" stroke="none"/>
<line x1="396" y1="377" x2="434.2" y2="364.7" stroke="#fff" stroke-width="0.7" stroke-opacity="0.85"/>
<line x1="434.2" y1="364.7" x2="442.2" y2="364.7" stroke="#fff" stroke-width="0.7" stroke-opacity="0.85"/>
<rect x="437.4" y="362.2" width="2.8000000000000114" height="2.400000000000034" fill="#fff" fill-opacity="0.85" stroke="none"/>
<line x1="399.7" y1="379.8" x2="435.8" y2="369.7" stroke="#fff" stroke-width="0.7" stroke-opacity="0.85"/>
<line x1="435.8" y1="369.7" x2="443.8" y2="369.7" stroke="#fff" stroke-width="0.7" stroke-opacity="0.85"/>
<rect x="439.0" y="367.2" width="2.8000000000000114" height="2.400000000000034" fill="#fff" fill-opacity="0.85" stroke="none"/>
<line x1="406" y1="381.4" x2="435.8" y2="374.1" stroke="#fff" stroke-width="0.7" stroke-opacity="0.85"/>
<line x1="435.8" y1="374.1" x2="443.8" y2="374.1" stroke="#fff" stroke-width="0.7" stroke-opacity="0.85"/>
<rect x="439.0" y="371.6" width="2.8000000000000114" height="2.3999999999999773" fill="#fff" fill-opacity="0.85" stroke="none"/>
<line x1="414" y1="382.4" x2="435.8" y2="377.9" stroke="#fff" stroke-width="0.7" stroke-opacity="0.85"/>
<line x1="435.8" y1="377.9" x2="443.8" y2="377.9" stroke="#fff" stroke-width="0.7" stroke-opacity="0.85"/>
<rect x="439.0" y="375.4" width="2.8000000000000114" height="2.400000000000034" fill="#fff" fill-opacity="0.85" stroke="none"/>
<line x1="294.6" y1="373.0" x2="299.4" y2="373.0" stroke="#fff" stroke-width="0.7" stroke-opacity="0.85"/>
<rect x="295.2" y="370.5" width="2.8000000000000114" height="2.400000000000034" fill="#fff" fill-opacity="0.85" stroke="none"/>
<line x1="299.4" y1="373.0" x2="309" y2="382" stroke="#fff" stroke-width="0.7" stroke-opacity="0.85"/>
<line x1="294.6" y1="379.0" x2="299.4" y2="379.0" stroke="#fff" stroke-width="0.7" stroke-opacity="0.85"/>
<rect x="295.2" y="376.5" width="2.8000000000000114" height="2.400000000000034" fill="#fff" fill-opacity="0.85" stroke="none"/>
<line x1="299.4" y1="379.0" x2="306" y2="384.4" stroke="#fff" stroke-width="0.7" stroke-opacity="0.85"/>
<line x1="294.6" y1="383.7" x2="299.4" y2="383.7" stroke="#fff" stroke-width="0.7" stroke-opacity="0.85"/>
<rect x="295.2" y="381.2" width="2.8000000000000114" height="2.400000000000034" fill="#fff" fill-opacity="0.85" stroke="none"/>
<line x1="299.4" y1="383.7" x2="301" y2="386" stroke="#fff" stroke-width="0.7" stroke-opacity="0.85"/>
<line x1="451.4" y1="378.6" x2="468.4" y2="364.7" stroke="#fff" stroke-width="0.7" stroke-opacity="0.85"/>
<line x1="468.4" y1="364.7" x2="476.4" y2="364.7" stroke="#fff" stroke-width="0.7" stroke-opacity="0.85"/>
<rect x="471.59999999999997" y="362.2" width="2.8000000000000114" height="2.400000000000034" fill="#fff" fill-opacity="0.85" stroke="none"/>
<line x1="454.6" y1="379.8" x2="468.4" y2="369.9" stroke="#fff" stroke-width="0.7" stroke-opacity="0.85"/>
<line x1="468.4" y1="369.9" x2="476.4" y2="369.9" stroke="#fff" stroke-width="0.7" stroke-opacity="0.85"/>
<rect x="471.59999999999997" y="367.4" width="2.8000000000000114" height="2.400000000000034" fill="#fff" fill-opacity="0.85" stroke="none"/>
<line x1="457" y1="381" x2="468.4" y2="374.5" stroke="#fff" stroke-width="0.7" stroke-opacity="0.85"/>
<line x1="468.4" y1="374.5" x2="476.4" y2="374.5" stroke="#fff" stroke-width="0.7" stroke-opacity="0.85"/>
<rect x="471.59999999999997" y="372.0" width="2.8000000000000114" height="2.3999999999999773" fill="#fff" fill-opacity="0.85" stroke="none"/>
<line x1="459.6" y1="383" x2="468.4" y2="379.1" stroke="#fff" stroke-width="0.7" stroke-opacity="0.85"/>
<line x1="468.4" y1="379.1" x2="476.4" y2="379.1" stroke="#fff" stroke-width="0.7" stroke-opacity="0.85"/>
<rect x="471.59999999999997" y="376.6" width="2.8000000000000114" height="2.3999999999999773" fill="#fff" fill-opacity="0.85" stroke="none"/>
<line x1="462" y1="386" x2="468.4" y2="383.7" stroke="#fff" stroke-width="0.7" stroke-opacity="0.85"/>
<line x1="468.4" y1="383.7" x2="476.4" y2="383.7" stroke="#fff" stroke-width="0.7" stroke-opacity="0.85"/>
<rect x="471.59999999999997" y="381.2" width="2.8000000000000114" height="2.400000000000034" fill="#fff" fill-opacity="0.85" stroke="none"/>
<line x1="464" y1="390.6" x2="468.4" y2="388.2" stroke="#fff" stroke-width="0.7" stroke-opacity="0.85"/>
<line x1="468.4" y1="388.2" x2="476.4" y2="388.2" stroke="#fff" stroke-width="0.7" stroke-opacity="0.85"/>
<rect x="471.59999999999997" y="385.7" width="2.8000000000000114" height="2.400000000000034" fill="#fff" fill-opacity="0.85" stroke="none"/>
<line x1="565.3" y1="252.8" x2="631.4" y2="272.0" stroke="#fff" stroke-width="0.7" stroke-opacity="0.85"/>
<line x1="631.4" y1="272.0" x2="640.4" y2="272.0" stroke="#fff" stroke-width="0.7" stroke-opacity="0.85"/>
<rect x="635.6" y="269.5" width="2.7999999999999545" height="2.3999999999999773" fill="#fff" fill-opacity="0.85" stroke="none"/>
<line x1="565.3" y1="268.8" x2="631.4" y2="284.9" stroke="#fff" stroke-width="0.7" stroke-opacity="0.85"/>
<line x1="631.4" y1="284.9" x2="640.4" y2="284.9" stroke="#fff" stroke-width="0.7" stroke-opacity="0.85"/>
<rect x="635.6" y="282.4" width="2.7999999999999545" height="2.400000000000034" fill="#fff" fill-opacity="0.85" stroke="none"/>
<line x1="554.8" y1="345" x2="632.4" y2="291.5" stroke="#fff" stroke-width="0.7" stroke-opacity="0.85"/>
<line x1="632.4" y1="291.5" x2="640.4" y2="291.5" stroke="#fff" stroke-width="0.7" stroke-opacity="0.85"/>
<rect x="635.6" y="289.0" width="2.7999999999999545" height="2.3999999999999773" fill="#fff" fill-opacity="0.85" stroke="none"/>
<line x1="561.6" y1="345.6" x2="632.4" y2="295.7" stroke="#fff" stroke-width="0.7" stroke-opacity="0.85"/>
<line x1="632.4" y1="295.7" x2="640.4" y2="295.7" stroke="#fff" stroke-width="0.7" stroke-opacity="0.85"/>
<rect x="635.6" y="293.2" width="2.7999999999999545" height="2.400000000000034" fill="#fff" fill-opacity="0.85" stroke="none"/>
<line x1="568" y1="346.6" x2="632.4" y2="301.0" stroke="#fff" stroke-width="0.7" stroke-opacity="0.85"/>
<line x1="632.4" y1="301.0" x2="640.4" y2="301.0" stroke="#fff" stroke-width="0.7" stroke-opacity="0.85"/>
<rect x="635.6" y="298.5" width="2.7999999999999545" height="2.3999999999999773" fill="#fff" fill-opacity="0.85" stroke="none"/>
<line x1="578" y1="349" x2="632.4" y2="311.1" stroke="#fff" stroke-width="0.7" stroke-opacity="0.85"/>
<line x1="632.4" y1="311.1" x2="640.4" y2="311.1" stroke="#fff" stroke-width="0.7" stroke-opacity="0.85"/>
<rect x="635.6" y="308.6" width="2.7999999999999545" height="2.3999999999999773" fill="#fff" fill-opacity="0.85" stroke="none"/>
<line x1="586" y1="349.6" x2="632.4" y2="317.4" stroke="#fff" stroke-width="0.7" stroke-opacity="0.85"/>
<line x1="632.4" y1="317.4" x2="640.4" y2="317.4" stroke="#fff" stroke-width="0.7" stroke-opacity="0.85"/>
<rect x="635.6" y="314.9" width="2.7999999999999545" height="2.400000000000034" fill="#fff" fill-opacity="0.85" stroke="none"/>
<line x1="592.6" y1="352" x2="632.4" y2="324.6" stroke="#fff" stroke-width="0.7" stroke-opacity="0.85"/>
<line x1="632.4" y1="324.6" x2="640.4" y2="324.6" stroke="#fff" stroke-width="0.7" stroke-opacity="0.85"/>
<rect x="635.6" y="322.1" width="2.7999999999999545" height="2.3999999999999773" fill="#fff" fill-opacity="0.85" stroke="none"/>
<line x1="598" y1="353.4" x2="632.4" y2="329.5" stroke="#fff" stroke-width="0.7" stroke-opacity="0.85"/>
<line x1="632.4" y1="329.5" x2="640.4" y2="329.5" stroke="#fff" stroke-width="0.7" stroke-opacity="0.85"/>
<rect x="635.6" y="327.0" width="2.7999999999999545" height="2.3999999999999773" fill="#fff" fill-opacity="0.85" stroke="none"/>
<line x1="571" y1="349.2" x2="634.2" y2="305.6" stroke="#fff" stroke-width="1.5" stroke-opacity="0.85" stroke-dasharray="2.2 0.9"/>
<line x1="634.2" y1="305.8" x2="640.4" y2="305.8" stroke="#fff" stroke-width="0.8" stroke-opacity="0.9"/>
<rect x="635.4" y="303.4" width="3.3999999999999773" height="2.2000000000000455" fill="#fff" fill-opacity="0.9" stroke="none"/>
<line x1="570" y1="393" x2="627.2" y2="337.4" stroke="#fff" stroke-width="0.7" stroke-opacity="0.85"/>
<line x1="627.2" y1="337.4" x2="635.2" y2="337.4" stroke="#fff" stroke-width="0.7" stroke-opacity="0.85"/>
<rect x="630.4000000000001" y="334.9" width="2.7999999999999545" height="2.400000000000034" fill="#fff" fill-opacity="0.85" stroke="none"/>
<line x1="578" y1="389" x2="627.2" y2="341.1" stroke="#fff" stroke-width="0.7" stroke-opacity="0.85"/>
<line x1="627.2" y1="341.1" x2="635.2" y2="341.1" stroke="#fff" stroke-width="0.7" stroke-opacity="0.85"/>
<rect x="630.4000000000001" y="338.6" width="2.7999999999999545" height="2.3999999999999773" fill="#fff" fill-opacity="0.85" stroke="none"/>
<line x1="584.4" y1="386" x2="627.2" y2="346.2" stroke="#fff" stroke-width="0.7" stroke-opacity="0.85"/>
<line x1="627.2" y1="346.2" x2="635.2" y2="346.2" stroke="#fff" stroke-width="0.7" stroke-opacity="0.85"/>
<rect x="630.4000000000001" y="343.7" width="2.7999999999999545" height="2.400000000000034" fill="#fff" fill-opacity="0.85" stroke="none"/>
<line x1="590" y1="389" x2="627.2" y2="351.5" stroke="#fff" stroke-width="0.7" stroke-opacity="0.85"/>
<line x1="627.2" y1="351.5" x2="635.2" y2="351.5" stroke="#fff" stroke-width="0.7" stroke-opacity="0.85"/>
<rect x="630.4000000000001" y="349.0" width="2.7999999999999545" height="2.3999999999999773" fill="#fff" fill-opacity="0.85" stroke="none"/>
<line x1="629" y1="378" x2="642.6" y2="389.7" stroke="#fff" stroke-width="0.7" stroke-opacity="0.85"/>
<line x1="642.6" y1="389.7" x2="650.1" y2="389.7" stroke="#fff" stroke-width="0.7" stroke-opacity="0.85"/>
<rect x="645.8000000000001" y="387.2" width="2.7999999999999545" height="2.400000000000034" fill="#fff" fill-opacity="0.85" stroke="none"/>
<line x1="632" y1="379" x2="642.6" y2="394.1" stroke="#fff" stroke-width="0.7" stroke-opacity="0.85"/>
<line x1="642.6" y1="394.1" x2="650.1" y2="394.1" stroke="#fff" stroke-width="0.7" stroke-opacity="0.85"/>
<rect x="645.8000000000001" y="391.6" width="2.7999999999999545" height="2.3999999999999773" fill="#fff" fill-opacity="0.85" stroke="none"/>
<line x1="635.4" y1="378" x2="642.6" y2="399.3" stroke="#fff" stroke-width="0.7" stroke-opacity="0.85"/>
<line x1="642.6" y1="399.3" x2="650.1" y2="399.3" stroke="#fff" stroke-width="0.7" stroke-opacity="0.85"/>
<rect x="645.8000000000001" y="396.8" width="2.7999999999999545" height="2.3999999999999773" fill="#fff" fill-opacity="0.85" stroke="none"/>
<line x1="625" y1="372" x2="642.6" y2="403.1" stroke="#fff" stroke-width="0.7" stroke-opacity="0.85"/>
<line x1="642.6" y1="403.1" x2="650.1" y2="403.1" stroke="#fff" stroke-width="0.7" stroke-opacity="0.85"/>
<rect x="645.8000000000001" y="400.6" width="2.7999999999999545" height="2.3999999999999773" fill="#fff" fill-opacity="0.85" stroke="none"/>
<line x1="656.6" y1="360" x2="663.4" y2="385.0" stroke="#fff" stroke-width="0.7" stroke-opacity="0.85"/>
<line x1="663.4" y1="385.0" x2="670.9" y2="385.0" stroke="#fff" stroke-width="0.7" stroke-opacity="0.85"/>
<rect x="666.6" y="382.5" width="2.7999999999999545" height="2.3999999999999773" fill="#fff" fill-opacity="0.85" stroke="none"/>
<line x1="657.6" y1="366" x2="663.4" y2="389.9" stroke="#fff" stroke-width="0.7" stroke-opacity="0.85"/>
<line x1="663.4" y1="389.9" x2="670.9" y2="389.9" stroke="#fff" stroke-width="0.7" stroke-opacity="0.85"/>
<rect x="666.6" y="387.4" width="2.7999999999999545" height="2.400000000000034" fill="#fff" fill-opacity="0.85" stroke="none"/>
<line x1="469" y1="450.8" x2="498.4" y2="440.6" stroke="#fff" stroke-width="0.7" stroke-opacity="0.85"/>
<line x1="498.4" y1="440.6" x2="506.4" y2="440.6" stroke="#fff" stroke-width="0.7" stroke-opacity="0.85"/>
<rect x="501.59999999999997" y="438.1" width="2.8000000000000114" height="2.3999999999999773" fill="#fff" fill-opacity="0.85" stroke="none"/>
<line x1="472" y1="457.5" x2="498.4" y2="446.5" stroke="#fff" stroke-width="0.7" stroke-opacity="0.85"/>
<line x1="498.4" y1="446.5" x2="506.4" y2="446.5" stroke="#fff" stroke-width="0.7" stroke-opacity="0.85"/>
<rect x="501.59999999999997" y="444.0" width="2.8000000000000114" height="2.3999999999999773" fill="#fff" fill-opacity="0.85" stroke="none"/>
<line x1="470" y1="460.4" x2="498.4" y2="450.3" stroke="#fff" stroke-width="0.7" stroke-opacity="0.85"/>
<line x1="498.4" y1="450.3" x2="506.4" y2="450.3" stroke="#fff" stroke-width="0.7" stroke-opacity="0.85"/>
<rect x="501.59999999999997" y="447.8" width="2.8000000000000114" height="2.3999999999999773" fill="#fff" fill-opacity="0.85" stroke="none"/>
<line x1="471" y1="462.4" x2="498.4" y2="453.3" stroke="#fff" stroke-width="0.7" stroke-opacity="0.85"/>
<line x1="498.4" y1="453.3" x2="506.4" y2="453.3" stroke="#fff" stroke-width="0.7" stroke-opacity="0.85"/>
<rect x="501.59999999999997" y="450.8" width="2.8000000000000114" height="2.3999999999999773" fill="#fff" fill-opacity="0.85" stroke="none"/>
<line x1="468.5" y1="474.5" x2="498.4" y2="457.7" stroke="#fff" stroke-width="0.7" stroke-opacity="0.85"/>
<line x1="498.4" y1="457.7" x2="506.4" y2="457.7" stroke="#fff" stroke-width="0.7" stroke-opacity="0.85"/>
<rect x="501.59999999999997" y="455.2" width="2.8000000000000114" height="2.400000000000034" fill="#fff" fill-opacity="0.85" stroke="none"/>
<line x1="482" y1="478.5" x2="498.4" y2="462.5" stroke="#fff" stroke-width="0.7" stroke-opacity="0.85"/>
<line x1="498.4" y1="462.5" x2="506.4" y2="462.5" stroke="#fff" stroke-width="0.7" stroke-opacity="0.85"/>
<rect x="501.59999999999997" y="460.0" width="2.8000000000000114" height="2.3999999999999773" fill="#fff" fill-opacity="0.85" stroke="none"/>
</g>
</svg>
</body></html>
